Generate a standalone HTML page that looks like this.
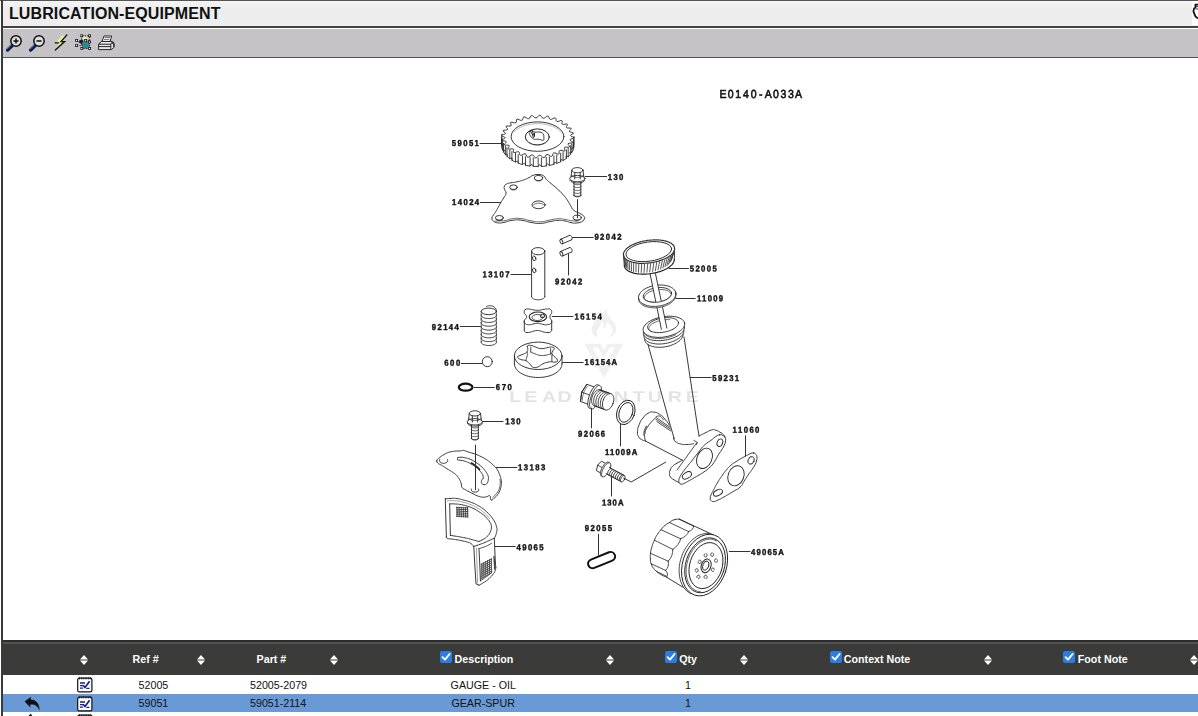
<!DOCTYPE html>
<html>
<head>
<meta charset="utf-8">
<title>LUBRICATION-EQUIPMENT</title>
<style>
html,body{margin:0;padding:0;background:#fff;overflow:hidden;}
body{width:1198px;height:716px;position:relative;font-family:"Liberation Sans",sans-serif;color:#000;}
#lb{position:absolute;left:1px;top:0;width:2px;height:716px;background:#3a3a3a;}
#topline{position:absolute;left:0;top:0;width:1198px;height:1px;background:#555;}
#hdr{position:absolute;left:3px;top:1px;width:1195px;height:25px;background:linear-gradient(#f5f5f5,#ededed 30%,#eeeeee);}
#hdr h1{position:absolute;left:6px;top:4px;margin:0;font-size:16px;line-height:18px;font-weight:bold;color:#111;white-space:nowrap;letter-spacing:0.1px;}
#hl1{position:absolute;left:3px;top:26px;width:1195px;height:2px;background:#444;}
#tb{position:absolute;left:3px;top:29px;width:1195px;height:28px;background:#c5c3c5;}
#hl2{position:absolute;left:3px;top:57px;width:1195px;height:1px;background:#555;}
#diagram{position:absolute;left:0;top:58px;width:1198px;height:582px;display:block;will-change:transform;}
#diagram text{font-family:"Liberation Sans",sans-serif;font-weight:bold;fill:#111;stroke:#111;stroke-width:0.4px;text-rendering:geometricPrecision;}
#thead{position:absolute;left:3px;top:640px;width:1195px;height:35px;background:#3b3b39;color:#fff;font-weight:bold;font-size:10.7px;}
#thead:before{content:"";position:absolute;left:0;top:0;width:100%;height:2px;background:#2c2c2c;}
#thead:after{content:"";position:absolute;left:0;top:2px;width:100%;height:2px;background:#525252;}
.th{position:absolute;top:12px;line-height:14px;white-space:nowrap;}
.cb{position:absolute;top:11px;width:12px;height:12px;background:#2b7de0;border-radius:2px;}
.cb svg{position:absolute;left:0;top:0;}
.so{position:absolute;top:15px;width:8px;height:10px;}
.row{position:absolute;left:3px;width:1195px;height:18px;font-size:10.7px;color:#111;}
.row span{position:absolute;top:2px;line-height:14px;white-space:nowrap;}
#r1 span{top:3px;}
.row svg{position:absolute;}
#r1{top:675px;height:19px;background:#fff;}
#r2{top:694px;background:#6a9ad6;}
#r3{top:712px;background:#fff;height:4px;}
#ui{position:absolute;left:0;top:0;width:1198px;height:58px;}
</style>
</head>
<body>
<div id="topline"></div>
<div id="hdr"><h1>LUBRICATION-EQUIPMENT</h1></div>
<div id="hl1"></div>
<div id="tb"></div>
<div id="hl2"></div>
<svg id="ui" width="1198" height="58" viewBox="0 0 1198 58">
<g fill="none" stroke-linecap="round">
<path d="M12.4 45.2L7.6 50" stroke="#0c1c4a" stroke-width="3.4"/><path d="M11.6 44.6L7.2 49" stroke="#5f8fd0" stroke-width="1"/>
<circle cx="16" cy="41" r="5.2" fill="#dedede" stroke="#111" stroke-width="1.5"/><path d="M13.4 41H18.6M16 38.4V43.6" stroke="#111" stroke-width="1.5" stroke-linecap="butt"/>
<path d="M35.4 45.2L30.6 50" stroke="#0c1c4a" stroke-width="3.4"/><path d="M34.6 44.6L30.2 49" stroke="#5f8fd0" stroke-width="1"/>
<circle cx="39" cy="41" r="5.2" fill="#dedede" stroke="#111" stroke-width="1.5"/><path d="M36.4 41H41.6" stroke="#111" stroke-width="1.5" stroke-linecap="butt"/>
<path d="M61.6 35.8L66 35.4L60.4 41.6L64 41.6L56.4 48.6L59 43L56 43Z" fill="#eaee92" stroke="none"/>
<path d="M66.8 35L61 41.6L64.6 41.6L55.4 50" stroke="#111" stroke-width="1.3" stroke-linejoin="miter"/><path d="M55.2 42.8H58.6" stroke="#111" stroke-width="1.2"/>
</g>
<g>
<path d="M78 42L83 38.6L84 45.6Z" fill="#16164e"/>
<circle cx="85.6" cy="44.6" r="3.8" fill="#2e8a8a"/><circle cx="84.6" cy="38.8" r="2.6" fill="#eef4b0"/>
<path d="M81.8 35.8H89.6V48.4H81.8Z" fill="none" stroke="#111" stroke-width="0.9" stroke-dasharray="1.6 1.2"/>
<path d="M76.6 40.4H89.4M76.6 45.6H82" fill="none" stroke="#111" stroke-width="0.8" stroke-dasharray="1.4 1.4"/>
<g fill="#fff" stroke="#111" stroke-width="0.8"><rect x="80.8" y="34.8" width="2" height="2"/><rect x="88.6" y="34.8" width="2" height="2"/><rect x="75.6" y="39.4" width="2" height="2"/><rect x="75.6" y="44.6" width="2" height="2"/><rect x="80.8" y="47.4" width="2" height="2"/><rect x="88.6" y="47.4" width="2" height="2"/><rect x="88.6" y="41" width="2" height="2"/><rect x="84.6" y="39.4" width="2" height="2"/></g>
</g>
<g stroke="#111" stroke-width="0.9" stroke-linejoin="round">
<path d="M102 41.6L104 36H111.6L110 41.6Z" fill="#fff"/>
<path d="M98.6 44.2L101.6 41.4H111L113.6 43.4V47.6L111.6 49.6H98.6Z" fill="#e8e8e8"/>
<path d="M98.6 44.2H110.6L113.4 42.6M98.8 46.6H110.8M110.8 44.2V49.4" fill="none"/>
<path d="M104.6 37.6H110M104 39.4H109.4" fill="none" stroke-width="0.6"/>
<path d="M111.4 41.6C113.4 42.4 114.4 44 113.8 47" fill="none" stroke="#333" stroke-width="1.6"/>
</g>
<rect x="1192" y="1" width="6" height="24" fill="#fff"/>
<path d="M1198 4.6H1195.4V7.6L1194 8.6L1193.4 11.4L1195.4 16.4L1198 18.6" fill="#fff" stroke="#111" stroke-width="1.8" stroke-linejoin="round"/>
<path d="M1195.6 6.6H1198M1195.6 9H1198" stroke="#1c3c5c" stroke-width="1"/>
</svg>
<svg id="diagram" width="1198" height="582" viewBox="0 58 1198 582">
<g fill="#000" stroke="none">
<text transform="translate(0 402.2) scale(1.25 1)" x="407.4 419.4 433.6 446.1 464.3 477.3 491 506.2 518.2 534.2 548.7" y="0" font-size="15.8" opacity="0.11" style="font-weight:bold;stroke:none;fill:#000">LEADVENTURE</text>
<path opacity="0.06" d="M584.4 343.8H600.4L603.8 350.6L607.4 343.8H623.4L604 378.2Z M592.6 347.6L603.8 368L615 347.6H609.6L603.8 358.4L598 347.6Z" fill-rule="evenodd"/>
<path opacity="0.06" d="M598.6 304.6C601.6 310.6 600.6 314.6 597.4 318.6C594.4 322.6 591 326.4 591.6 331C592.2 334.6 595 336.8 598.6 337.4C596.4 334.6 596.4 331.4 598.4 328.4C600.4 325.6 601.6 323.4 601 320.4C603.6 322.6 604.4 325.8 603.6 328.8C606 327 607 324.2 606.6 321C609.6 324.2 613 327.6 612.4 331.6C612 334.6 610 336.4 607.4 337.4C612.6 336.8 616.4 333.4 616.2 328.6C616 323 611 319.6 608.4 315.6C606.8 313 606.6 310.6 607.4 308.2C604.6 309.8 603.4 312.4 603.8 315.4C601.6 312.2 600.6 308.4 598.6 304.6Z"/>
</g>
<g fill="none" stroke="#222" stroke-width="0.9" stroke-linecap="round" stroke-linejoin="round">
<path d="M573.9 137.8C573.8 138.8 570.5 138.6 570.1 139.7C569.8 140.8 573.1 141.6 572.6 142.5C572.1 143.5 568.8 142.7 568.1 143.7C567.4 144.8 570.3 146.1 569.5 147C568.7 147.8 565.6 146.5 564.6 147.4C563.5 148.3 565.9 150.1 564.8 150.9C563.7 151.6 561.1 149.7 559.7 150.5C558.2 151.2 560.1 153.5 558.7 154.1C557.4 154.6 555.3 152.3 553.7 152.9C552 153.4 553.2 156 551.7 156.4C550.1 156.7 548.7 154.2 546.9 154.5C545.1 154.8 545.6 157.5 543.9 157.7C542.2 157.9 541.5 155.1 539.6 155.2C537.8 155.2 537.5 158 535.8 158C534.1 157.9 534.2 155.1 532.3 154.9C530.4 154.7 529.4 157.4 527.8 157.2C526.1 156.9 527 154.2 525.2 153.8C523.5 153.4 521.8 155.8 520.3 155.3C518.8 154.9 520.4 152.4 518.8 151.8C517.3 151.1 515 153.2 513.7 152.6C512.4 151.9 514.6 149.8 513.3 149C512.1 148.2 509.3 149.8 508.3 149C507.3 148.2 510 146.6 509.1 145.6C508.2 144.6 505 145.7 504.4 144.8C503.7 143.9 506.8 142.8 506.3 141.7C505.8 140.7 502.4 141.1 502.1 140.2C501.8 139.2 505.2 138.8 505.1 137.6C504.9 136.5 501.6 136.4 501.7 135.4C501.8 134.4 505.1 134.6 505.5 133.5C505.8 132.4 502.5 131.6 503 130.7C503.5 129.7 506.8 130.5 507.5 129.5C508.2 128.4 505.3 127.1 506.1 126.2C506.9 125.4 510 126.7 511 125.8C512.1 124.9 509.7 123.1 510.8 122.3C511.9 121.6 514.5 123.5 515.9 122.7C517.4 122 515.5 119.7 516.9 119.1C518.2 118.6 520.3 120.9 521.9 120.3C523.6 119.8 522.4 117.2 523.9 116.8C525.5 116.5 526.9 119 528.7 118.7C530.5 118.4 530 115.7 531.7 115.5C533.4 115.3 534.1 118.1 536 118C537.8 118 538.1 115.2 539.8 115.2C541.5 115.3 541.4 118.1 543.3 118.3C545.2 118.5 546.2 115.8 547.8 116C549.5 116.3 548.6 119 550.4 119.4C552.1 119.8 553.8 117.4 555.3 117.9C556.8 118.3 555.2 120.8 556.8 121.4C558.3 122.1 560.6 120 561.9 120.6C563.2 121.3 561 123.4 562.3 124.2C563.5 125 566.3 123.4 567.3 124.2C568.3 125 565.6 126.6 566.5 127.6C567.4 128.6 570.6 127.5 571.2 128.4C571.9 129.3 568.8 130.4 569.3 131.5C569.8 132.5 573.2 132.1 573.5 133C573.8 134 570.4 134.4 570.5 135.6C570.7 136.7 574 136.8 573.9 137.8Z" fill="#fff"/>
<path d="M574 136.4V145L573.7 147.8V139.2M573.7 147.8Q570.1 147.1 573.2 149.7M573.2 141.1V149.7L571.8 152.5V143.9M571.8 152.5Q568.1 151.1 570.6 154.3M570.6 145.7V154.3L568.2 156.8V148.2M568.2 156.8Q564.6 154.8 566.4 158.4M566.4 149.8V158.4L563.1 160.5V151.9M563.1 160.5Q559.7 157.9 560.7 161.8M560.7 153.2V161.8L556.7 163.4V154.8M556.7 163.4Q553.7 160.3 553.9 164.4M553.9 155.8V164.4L549.4 165.5V156.9M549.4 165.5Q546.9 161.9 546.3 166M546.3 157.4V166L541.4 166.5V157.9M541.4 166.5Q539.6 162.6 538.2 166.6M538.2 158V166.6L533.3 166.4V157.8M533.3 166.4Q532.3 162.3 530.1 166.1M530.1 157.5V166.1L525.5 165.3V156.7M525.5 165.3Q525.2 161.2 522.5 164.6M522.5 156V164.6L518.2 163.2V154.6M518.2 163.2Q518.8 159.2 515.5 162.1M515.5 153.5V162.1L511.9 160.2V151.6M511.9 160.2Q513.3 156.4 509.8 158.7M509.8 150.1V158.7L506.9 156.4V147.8M506.9 156.4Q509.1 153 505.4 154.7M505.4 146.1V154.7L503.5 152V143.4M503.5 152Q506.3 149.1 502.6 150.2M502.6 141.6V150.2L501.8 147.4V138.8M501.8 147.4Q505.1 145 501.6 145.4M501.6 136.8V145.4L501.9 142.6V134" stroke-width="0.85"/>
<ellipse cx="537.5" cy="136.6" rx="26.4" ry="14.7"/>
<path d="M514.5 131.7L515.8 130.4L517.3 129.1L519.1 128L521.1 127L523.3 126.1L525.6 125.3L528.1 124.7L530.7 124.2L533.4 123.9L536.1 123.7L538.9 123.7L541.6 123.9L544.3 124.2L546.9 124.7L549.4 125.3L551.7 126.1L553.9 127L555.9 128L557.7 129.1L559.2 130.4L560.5 131.7" stroke-width="0.5" stroke="#777"/>
<ellipse cx="537.3" cy="136.9" rx="12" ry="8" stroke-width="1"/>
<path d="M547.9 140L547.6 140.7L547.1 141.4L546.5 142L545.8 142.6L545.1 143.1L544.2 143.6L543.3 144.1L542.3 144.4L541.2 144.7L540.1 145L539 145.1L537.9 145.2L536.7 145.2L535.6 145.1L534.5 145L533.4 144.7L532.3 144.4L531.3 144.1L530.4 143.6L529.5 143.1L528.8 142.6L528.1 142L527.5 141.4L527 140.7L526.7 140" stroke-width="0.6" stroke="#666"/>
<path d="M531.7 130.6C532.5 130.7 532.5 130.8 533.4 131.2C534.3 131.6 533.9 131.9 535 132.1C536.1 132.3 536.2 132 537.5 132C538.8 132 538.9 131.9 540 132.1C541.1 132.3 541 132.3 541.8 132.7C542.6 133.1 542.5 133.1 543 133.7C543.5 134.3 543.5 134.3 543.7 135C543.9 135.7 543.7 135.5 543.8 136.4C543.9 137.3 543.9 137.3 543.9 138.2C543.9 139.1 544 139 543.8 139.6C543.6 140.2 543.5 140.3 543 140.5C542.5 140.7 542.5 140.4 541.8 140.2C541.1 140 541.3 139.8 540.5 139.6C539.7 139.4 539.7 139.4 538.8 139.3C537.9 139.2 538 139.2 537.1 139.2C536.2 139.2 536.4 139.3 535.6 139.3C534.8 139.3 534.9 139.4 534.2 139.2C533.5 139 533.5 139 532.8 138.5C532.1 138 532.3 138.2 531.7 137.5C531.1 136.8 531 136.7 530.4 135.8C529.8 134.9 529.9 134.9 529.6 134.1C529.3 133.3 529.3 133.5 529.2 132.8C529.1 132.1 529.1 132.2 529.4 131.6C529.7 131 529.8 131 530.4 130.7C531 130.4 530.9 130.5 531.7 130.6Z" stroke-width="0.9"/>
<path d="M530.4 131.2L532.4 134.4M532.2 131L534.4 136.2M532.4 134.4L533.4 137.6M534.6 133L534.4 136.2" stroke-width="0.9" stroke="#111"/>
<path d="M538.5 174.6C541.8 174.8 540.8 174.2 543.5 175.8C546.2 177.4 544 176.9 546.5 179.5C549 182.1 547.5 180.5 551 183.5C554.5 186.5 553.2 185.1 557 188.6C560.8 192.1 559.2 190.3 562.5 194C565.8 197.7 564.3 195.8 567 199.6C569.7 203.4 568.2 201.9 570.5 205.5C572.8 209.1 571 207.8 574 210.4C577 213 576.2 211.3 579.5 213.2C582.8 215.1 582.2 214.3 583.8 216.2C585.4 218.1 585 217.1 584.2 219C583.4 220.9 584.2 220.5 581.5 221.8C578.8 223.1 579.5 222.7 576 223C572.5 223.3 574.7 223.3 571 222.6C567.3 221.9 569.3 221.7 565 221C560.7 220.3 563 220.2 558 220.4C553 220.6 555.8 220.6 550 221.6C544.2 222.6 546.8 223.1 540.5 223.4C534.2 223.7 537.5 223.5 531 222.4C524.5 221.3 527.3 220.9 521 220.2C514.7 219.5 517.7 219.7 512 220.4C506.3 221.1 508.8 221.6 504 222.4C499.2 223.2 501.1 223.3 497.5 222.8C493.9 222.3 495 222.4 493.2 220.8C491.4 219.2 491.9 219.9 492 218C492.1 216.1 491.9 217.5 493.4 215C494.9 212.5 494.2 214.2 496.4 210.5C498.6 206.8 497.6 208.2 500 204C502.4 199.8 501.6 201.5 503.6 198C505.6 194.5 505.7 196.3 506 193.5C506.3 190.7 505.1 191.9 504.6 189.5C504.1 187.1 503.7 188.2 504.4 186.4C505.1 184.6 504.4 185.2 506.6 184C508.8 182.8 507.5 183.5 511 182.8C514.5 182.1 512.8 182.7 517 181.8C521.2 180.9 519.5 181.4 523.5 180C527.5 178.6 525.7 179.2 529 177.6C532.3 176 530.3 176.2 533.5 175.2C536.7 174.2 535.2 174.4 538.5 174.6Z" fill="#fff"/>
<path d="M495 221.2C496.3 221.1 495.7 221 499 220.8C502.3 220.6 500.7 221.3 505 220.6C509.3 219.9 506.7 219.5 512 218.8C517.3 218.1 514.7 217.9 521 218.6C527.3 219.3 524.5 219.7 531 220.8C537.5 221.9 534.2 222.1 540.5 221.8C546.8 221.5 544.2 221 550 220C555.8 219 553 219 558 218.8C563 218.6 560.3 218.7 565 219.4C569.7 220.1 567.7 220.3 572 220.8C576.3 221.3 576 220.9 578 221" stroke-width="0.7"/>
<ellipse cx="538.5" cy="178" rx="4.1" ry="2.5"/>
<path d="M541.9 179.4L541.8 179.7L541.7 179.9L541.6 180.1L541.4 180.2L541.1 180.4L540.9 180.6L540.6 180.7L540.3 180.8L540 180.9L539.6 181L539.2 181.1L538.9 181.1L538.5 181.1L538.1 181.1L537.8 181.1L537.4 181L537 180.9L536.7 180.8L536.4 180.7L536.1 180.6L535.9 180.4L535.6 180.2L535.4 180.1L535.3 179.9L535.2 179.7L535.1 179.4" stroke-width="0.6"/>
<ellipse cx="513.5" cy="187.2" rx="3.8" ry="2.3"/>
<path d="M516.7 188.6L516.6 188.8L516.5 189L516.3 189.2L516.2 189.3L515.9 189.5L515.7 189.6L515.4 189.8L515.2 189.9L514.8 190L514.5 190L514.2 190.1L513.8 190.1L513.5 190.1L513.2 190.1L512.8 190.1L512.5 190L512.2 190L511.8 189.9L511.6 189.8L511.3 189.6L511.1 189.5L510.8 189.3L510.7 189.2L510.5 189L510.4 188.8L510.3 188.6" stroke-width="0.6"/>
<ellipse cx="499.4" cy="217.8" rx="4" ry="2.3"/>
<path d="M502.7 219.2L502.7 219.4L502.5 219.6L502.4 219.8L502.2 219.9L502 220.1L501.7 220.2L501.4 220.4L501.1 220.5L500.8 220.6L500.5 220.6L500.1 220.7L499.8 220.7L499.4 220.7L499 220.7L498.7 220.7L498.3 220.6L498 220.6L497.7 220.5L497.4 220.4L497.1 220.2L496.8 220.1L496.6 219.9L496.4 219.8L496.3 219.6L496.1 219.4L496.1 219.2" stroke-width="0.6"/>
<ellipse cx="577.2" cy="217.6" rx="4.1" ry="2.4"/>
<path d="M580.6 219L580.5 219.2L580.4 219.4L580.3 219.6L580.1 219.8L579.8 220L579.6 220.1L579.3 220.2L579 220.3L578.7 220.4L578.3 220.5L577.9 220.6L577.6 220.6L577.2 220.6L576.8 220.6L576.5 220.6L576.1 220.5L575.7 220.4L575.4 220.3L575.1 220.2L574.8 220.1L574.6 220L574.3 219.8L574.1 219.6L574 219.4L573.9 219.2L573.8 219" stroke-width="0.6"/>
<ellipse cx="538.6" cy="204.8" rx="6.6" ry="3.9"/>
<path d="M533.1 205.3L533.4 205L533.7 204.7L534 204.4L534.5 204.2L534.9 203.9L535.4 203.7L535.9 203.6L536.5 203.4L537.1 203.3L537.7 203.2L538.3 203.2L538.9 203.2L539.5 203.2L540.1 203.3L540.7 203.4L541.3 203.6L541.8 203.7L542.3 203.9L542.7 204.2L543.2 204.4L543.5 204.7L543.8 205L544.1 205.3" stroke-width="0.7"/>
<ellipse cx="577.4" cy="170.2" rx="5.6" ry="2.6" fill="#fff"/>
<path d="M571.8 170.2L571 176.9M583 170.2L583.8 176.9"/>
<path d="M574.8 172.7V178.9M580.2 172.6V178.8"/>
<path d="M583.4 175.3L583.2 175.6L582.9 175.9L582.6 176.1L582.2 176.4L581.8 176.6L581.3 176.8L580.8 176.9L580.2 177.1L579.6 177.2L579 177.3L578.4 177.4L577.7 177.4L577.1 177.4L576.4 177.4L575.8 177.3L575.2 177.2L574.6 177.1L574 176.9L573.5 176.8L573 176.6L572.6 176.4L572.2 176.1L571.9 175.9L571.6 175.6L571.4 175.3" stroke-width="0.7"/>
<ellipse cx="577.4" cy="178.6" rx="7.7" ry="3.2"/>
<path d="M584.7 180.3L584.6 180.6L584.4 180.9L584.1 181.2L583.8 181.5L583.4 181.7L582.9 182L582.3 182.2L581.7 182.4L581.1 182.6L580.4 182.7L579.7 182.8L578.9 182.9L578.2 183L577.4 183L576.6 183L575.9 182.9L575.1 182.8L574.4 182.7L573.7 182.6L573.1 182.4L572.5 182.2L571.9 182L571.4 181.7L571 181.5L570.7 181.2L570.4 180.9L570.2 180.6L570.1 180.3"/>
<path d="M574 182.2V195.4M580.8 182.2V195.4"/>
<path d="M581 183.4L581 183.5L580.9 183.7L580.8 183.8L580.7 183.9L580.5 184.1L580.3 184.2L580.1 184.3L579.8 184.4L579.5 184.5L579.2 184.5L578.9 184.6L578.5 184.6L578.1 184.7L577.8 184.7L577.4 184.7L577 184.7L576.7 184.7L576.3 184.6L575.9 184.6L575.6 184.5L575.3 184.5L575 184.4L574.7 184.3L574.5 184.2L574.3 184.1L574.1 183.9L574 183.8L573.9 183.7L573.8 183.5L573.8 183.4" stroke-width="0.8"/>
<path d="M581 186.3L581 186.4L580.9 186.6L580.8 186.7L580.7 186.8L580.5 187L580.3 187.1L580.1 187.2L579.8 187.3L579.5 187.4L579.2 187.4L578.9 187.5L578.5 187.5L578.1 187.6L577.8 187.6L577.4 187.6L577 187.6L576.7 187.6L576.3 187.5L575.9 187.5L575.6 187.4L575.3 187.4L575 187.3L574.7 187.2L574.5 187.1L574.3 187L574.1 186.8L574 186.7L573.9 186.6L573.8 186.4L573.8 186.3" stroke-width="0.8"/>
<path d="M581 189.2L581 189.3L580.9 189.5L580.8 189.6L580.7 189.7L580.5 189.8L580.3 190L580.1 190.1L579.8 190.2L579.5 190.3L579.2 190.3L578.9 190.4L578.5 190.4L578.1 190.5L577.8 190.5L577.4 190.5L577 190.5L576.7 190.5L576.3 190.4L575.9 190.4L575.6 190.3L575.3 190.3L575 190.2L574.7 190.1L574.5 190L574.3 189.8L574.1 189.7L574 189.6L573.9 189.5L573.8 189.3L573.8 189.2" stroke-width="0.8"/>
<path d="M581 192.1L581 192.2L580.9 192.4L580.8 192.5L580.7 192.6L580.5 192.8L580.3 192.9L580.1 193L579.8 193.1L579.5 193.2L579.2 193.2L578.9 193.3L578.5 193.3L578.1 193.4L577.8 193.4L577.4 193.4L577 193.4L576.7 193.4L576.3 193.3L575.9 193.3L575.6 193.2L575.3 193.2L575 193.1L574.7 193L574.5 192.9L574.3 192.8L574.1 192.6L574 192.5L573.9 192.4L573.8 192.2L573.8 192.1" stroke-width="0.8"/>
<path d="M581 195L581 195.1L580.9 195.3L580.8 195.4L580.7 195.5L580.5 195.7L580.3 195.8L580.1 195.9L579.8 196L579.5 196.1L579.2 196.1L578.9 196.2L578.5 196.2L578.1 196.3L577.8 196.3L577.4 196.3L577 196.3L576.7 196.3L576.3 196.2L575.9 196.2L575.6 196.1L575.3 196.1L575 196L574.7 195.9L574.5 195.8L574.3 195.7L574.1 195.5L574 195.4L573.9 195.3L573.8 195.1L573.8 195" stroke-width="0.8"/>
<path d="M580.8 195.4L580.8 195.5L580.7 195.7L580.6 195.8L580.5 196L580.3 196.1L580.2 196.2L579.9 196.3L579.7 196.4L579.4 196.5L579.1 196.6L578.8 196.7L578.5 196.7L578.1 196.8L577.8 196.8L577.4 196.8L577 196.8L576.7 196.8L576.3 196.7L576 196.7L575.7 196.6L575.4 196.5L575.1 196.4L574.9 196.3L574.6 196.2L574.5 196.1L574.3 196L574.2 195.8L574.1 195.7L574 195.5L574 195.4"/>
<path d="M577.5 199.6L577.5 217.8" stroke-width="1" stroke="#333"/>
<ellipse cx="538.2" cy="251.2" rx="6.6" ry="3.6"/>
<path d="M531.6 251.2V296.4M544.8 251.2V296.4"/>
<path d="M544.8 296.4L544.8 296.8L544.7 297.1L544.5 297.5L544.2 297.8L543.9 298.1L543.5 298.4L543.1 298.7L542.6 298.9L542.1 299.2L541.5 299.3L540.9 299.5L540.2 299.6L539.6 299.7L538.9 299.8L538.2 299.8L537.5 299.8L536.8 299.7L536.2 299.6L535.5 299.5L534.9 299.3L534.3 299.2L533.8 298.9L533.3 298.7L532.9 298.4L532.5 298.1L532.2 297.8L531.9 297.5L531.7 297.1L531.6 296.8L531.6 296.4"/>
<ellipse cx="534.2" cy="258.4" rx="1.6" ry="2.4" transform="rotate(-15 534.2 258.4)"/>
<ellipse cx="534.2" cy="270.4" rx="1.6" ry="2.4" transform="rotate(-15 534.2 270.4)"/>
<ellipse cx="561.4" cy="241.6" rx="1.3" ry="2.4" transform="rotate(-23.5 561.4 241.6)"/>
<path d="M562.4 243.8L571.6 239.8M560.4 239.4L569.6 235.4"/>
<path d="M569.6 235.4L569.8 235.4L569.9 235.3L570.1 235.3L570.2 235.4L570.4 235.4L570.5 235.5L570.7 235.6L570.8 235.7L571 235.9L571.2 236.1L571.3 236.2L571.4 236.4L571.6 236.6L571.7 236.9L571.8 237.1L571.9 237.3L572 237.6L572 237.8L572.1 238L572.1 238.3L572.1 238.5L572.1 238.7L572.1 238.9L572.1 239.1L572 239.2L572 239.4L571.9 239.5L571.8 239.6L571.7 239.7L571.6 239.8"/>
<ellipse cx="561.4" cy="253.8" rx="1.3" ry="2.4" transform="rotate(-23.5 561.4 253.8)"/>
<path d="M562.4 256L571.6 252M560.4 251.6L569.6 247.6"/>
<path d="M569.6 247.6L569.8 247.6L569.9 247.5L570.1 247.5L570.2 247.6L570.4 247.6L570.5 247.7L570.7 247.8L570.8 247.9L571 248.1L571.2 248.3L571.3 248.4L571.4 248.6L571.6 248.8L571.7 249.1L571.8 249.3L571.9 249.5L572 249.8L572 250L572.1 250.2L572.1 250.5L572.1 250.7L572.1 250.9L572.1 251.1L572.1 251.3L572 251.4L572 251.6L571.9 251.7L571.8 251.8L571.7 251.9L571.6 252"/>
<ellipse cx="488.8" cy="311.4" rx="7.6" ry="3.3"/>
<path d="M496.1 314.4L496.3 314.7L496.4 315.1L496.4 315.4L496.3 315.8L496.1 316.1L495.9 316.4L495.6 316.7L495.2 317L494.7 317.3L494.2 317.6L493.6 317.8L492.9 318L492.3 318.2L491.5 318.3L490.8 318.4L490 318.5L489.2 318.5L488.4 318.5L487.6 318.5L486.8 318.4L486.1 318.3L485.3 318.2L484.7 318L484 317.8L483.4 317.6L482.9 317.3L482.4 317L482 316.7L481.7 316.4L481.5 316.1L481.3 315.8L481.2 315.4L481.2 315.1L481.3 314.7L481.5 314.4"/>
<path d="M496.1 318.2L496.3 318.6L496.4 318.9L496.4 319.3L496.3 319.6L496.1 320L495.9 320.3L495.6 320.6L495.2 320.9L494.7 321.2L494.2 321.4L493.6 321.7L492.9 321.9L492.3 322L491.5 322.2L490.8 322.3L490 322.4L489.2 322.4L488.4 322.4L487.6 322.4L486.8 322.3L486.1 322.2L485.3 322L484.7 321.9L484 321.7L483.4 321.4L482.9 321.2L482.4 320.9L482 320.6L481.7 320.3L481.5 320L481.3 319.6L481.2 319.3L481.2 318.9L481.3 318.6L481.5 318.2"/>
<path d="M496.1 322.1L496.3 322.4L496.4 322.8L496.4 323.1L496.3 323.5L496.1 323.8L495.9 324.1L495.6 324.4L495.2 324.7L494.7 325L494.2 325.3L493.6 325.5L492.9 325.7L492.3 325.9L491.5 326L490.8 326.1L490 326.2L489.2 326.2L488.4 326.2L487.6 326.2L486.8 326.1L486.1 326L485.3 325.9L484.7 325.7L484 325.5L483.4 325.3L482.9 325L482.4 324.7L482 324.4L481.7 324.1L481.5 323.8L481.3 323.5L481.2 323.1L481.2 322.8L481.3 322.4L481.5 322.1"/>
<path d="M496.1 325.9L496.3 326.3L496.4 326.6L496.4 327L496.3 327.3L496.1 327.7L495.9 328L495.6 328.3L495.2 328.6L494.7 328.9L494.2 329.1L493.6 329.4L492.9 329.6L492.3 329.7L491.5 329.9L490.8 330L490 330.1L489.2 330.1L488.4 330.1L487.6 330.1L486.8 330L486.1 329.9L485.3 329.7L484.7 329.6L484 329.4L483.4 329.1L482.9 328.9L482.4 328.6L482 328.3L481.7 328L481.5 327.7L481.3 327.3L481.2 327L481.2 326.6L481.3 326.3L481.5 325.9"/>
<path d="M496.1 329.8L496.3 330.1L496.4 330.5L496.4 330.8L496.3 331.2L496.1 331.5L495.9 331.8L495.6 332.1L495.2 332.4L494.7 332.7L494.2 333L493.6 333.2L492.9 333.4L492.3 333.6L491.5 333.7L490.8 333.8L490 333.9L489.2 333.9L488.4 333.9L487.6 333.9L486.8 333.8L486.1 333.7L485.3 333.6L484.7 333.4L484 333.2L483.4 333L482.9 332.7L482.4 332.4L482 332.1L481.7 331.8L481.5 331.5L481.3 331.2L481.2 330.8L481.2 330.5L481.3 330.1L481.5 329.8"/>
<path d="M496.1 333.6L496.3 334L496.4 334.3L496.4 334.7L496.3 335L496.1 335.4L495.9 335.7L495.6 336L495.2 336.3L494.7 336.6L494.2 336.8L493.6 337.1L492.9 337.3L492.3 337.4L491.5 337.6L490.8 337.7L490 337.8L489.2 337.8L488.4 337.8L487.6 337.8L486.8 337.7L486.1 337.6L485.3 337.4L484.7 337.3L484 337.1L483.4 336.8L482.9 336.6L482.4 336.3L482 336L481.7 335.7L481.5 335.4L481.3 335L481.2 334.7L481.2 334.3L481.3 334L481.5 333.6"/>
<path d="M496.1 337.5L496.3 337.8L496.4 338.2L496.4 338.5L496.3 338.9L496.1 339.2L495.9 339.5L495.6 339.8L495.2 340.1L494.7 340.4L494.2 340.7L493.6 340.9L492.9 341.1L492.3 341.3L491.5 341.4L490.8 341.5L490 341.6L489.2 341.6L488.4 341.6L487.6 341.6L486.8 341.5L486.1 341.4L485.3 341.3L484.7 341.1L484 340.9L483.4 340.7L482.9 340.4L482.4 340.1L482 339.8L481.7 339.5L481.5 339.2L481.3 338.9L481.2 338.5L481.2 338.2L481.3 337.8L481.5 337.5"/>
<path d="M496.1 341.3L496.3 341.7L496.4 342L496.4 342.4L496.3 342.7L496.1 343.1L495.9 343.4L495.6 343.7L495.2 344L494.7 344.3L494.2 344.5L493.6 344.8L492.9 345L492.3 345.1L491.5 345.3L490.8 345.4L490 345.5L489.2 345.5L488.4 345.5L487.6 345.5L486.8 345.4L486.1 345.3L485.3 345.1L484.7 345L484 344.8L483.4 344.5L482.9 344.3L482.4 344L482 343.7L481.7 343.4L481.5 343.1L481.3 342.7L481.2 342.4L481.2 342L481.3 341.7L481.5 341.3"/>
<path d="M481.2 311.4V342.2M496.4 311.4V342.2" stroke-width="0.6"/>
<path d="M486.5 306.4C490.5 304.6 495.5 306 496.6 310.4" stroke-width="0.8"/>
<circle cx="487.3" cy="361.7" r="5"/>
<ellipse cx="465.6" cy="387.2" rx="6.8" ry="3.5" stroke-width="2.2" stroke="#111"/>
<path d="M525.3 309.6C526.4 308.4 525.8 309.1 527.6 309C529.4 308.9 528.5 309 530.6 309.3C532.7 309.6 531.8 309.7 534 310C536.2 310.3 535.1 310.3 537.3 310.3C539.5 310.3 538.3 310.3 540.6 310C542.9 309.7 541.8 309.6 544.1 309.3C546.4 309 545.4 308.9 547.6 309C549.8 309.1 549.2 308.4 550.6 309.6C552 310.8 551.7 310.9 551.7 312.6C551.7 314.3 551.2 313.2 550.6 314.6C550 316 550 315.3 550 316.8C550 318.3 550 317.7 550.6 319C551.2 320.3 551.6 319.3 551.7 320.8C551.8 322.3 552.2 322.1 550.8 323.4C549.4 324.7 549.8 324.2 547.6 324.6C545.4 325 546.4 324.9 544.1 324.6C541.8 324.3 542.9 324.2 540.6 323.8C538.3 323.4 539.5 323.3 537.3 323.3C535.1 323.3 536.2 323.4 534 323.8C531.8 324.2 532.7 324.3 530.6 324.6C528.5 324.9 529.4 325 527.6 324.6C525.8 324.2 526.2 324.7 525.1 323.4C524 322.1 524 322.3 524.2 320.8C524.4 319.3 524.8 320.3 525.6 319C526.4 317.7 526.6 318.3 526.6 316.8C526.6 315.3 526.4 316 525.6 314.6C524.8 313.2 524.3 314.3 524.2 312.6C524.1 310.9 524.2 310.8 525.3 309.6Z" fill="#fff"/>
<path d="M524.3 321V330M551.7 321V330"/>
<path d="M524.3 330C524.5 330.6 524.1 331 525 331.8C525.9 332.6 525.1 332.4 527 332.5C528.9 332.6 528.3 332.6 530.6 332.1C532.9 331.6 531.8 331.5 534 331C536.2 330.5 535.1 330.5 537.3 330.5C539.5 330.5 538.3 330.5 540.6 331C542.9 331.5 541.6 331.6 544.1 332.1C546.6 332.6 545.8 332.6 548 332.5C550.2 332.4 549.4 332.6 550.6 331.8C551.8 331 551.3 330.6 551.7 330"/>
<ellipse cx="537.9" cy="316.8" rx="8.7" ry="4.8" stroke-width="1.1"/>
<ellipse cx="537.4" cy="317.5" rx="5.4" ry="3" stroke-width="0.8"/>
<ellipse cx="542.4" cy="316" rx="2.2" ry="1.8" stroke-width="0.9"/>
<ellipse cx="538.2" cy="355.8" rx="23.8" ry="13.7" fill="#fff"/>
<path d="M514.4 355.8V363.8M562 355.8V363.8"/>
<path d="M562 363.8L561.9 365.2L561.5 366.6L560.8 368L559.9 369.4L558.8 370.7L557.5 371.9L555.9 373L554.1 374L552.2 374.9L550.1 375.7L547.9 376.3L545.6 376.8L543.1 377.2L540.7 377.4L538.2 377.5L535.7 377.4L533.3 377.2L530.8 376.8L528.5 376.3L526.3 375.7L524.2 374.9L522.3 374L520.5 373L518.9 371.9L517.6 370.7L516.5 369.4L515.6 368L514.9 366.6L514.5 365.2L514.4 363.8"/>
<path d="M527.4 346.1C528.2 345 528.8 345.2 530.8 345.4C532.8 345.6 532.5 345.9 534.8 346.7C537.1 347.5 537 347.9 539.5 348.4C542 348.9 541.9 348.7 544.2 348.4C546.5 348.1 546.2 347.7 548.2 347.4C550.2 347.1 550 346.8 551.6 347.1C553.2 347.4 554 347.1 554.2 348.4C554.4 349.7 552.6 350.3 552.2 352.1C551.8 353.9 551.4 352.9 552.8 355C554.2 357.1 557 358.2 557.6 360.1C558.2 362 556.5 361.6 554.9 362.1C553.3 362.6 553.4 361.8 551.6 361.8C549.8 361.8 550.5 361.6 548.2 362.1C545.9 362.6 545.6 362.5 542.9 363.8C540.2 365.1 540.4 365.8 538.2 366.8C536 367.8 536.4 367.5 534.8 367.5C533.2 367.5 533.4 367.7 532.1 366.8C530.8 365.9 531.4 365.5 530.1 364.2C528.8 362.9 528.5 362.8 527.4 361.8C526.3 360.8 527.6 361.1 525.8 360.5C524 359.9 522.9 360.3 520.7 359.5C518.5 358.7 518.1 358.4 517.7 357.4C517.3 356.4 517.6 356.7 519.1 355.8C520.6 354.9 521.3 355.1 523.4 354.1C525.5 353.1 525.6 353.4 526.8 352.1C528 350.8 527.6 351 527.8 349.4C528 347.8 526.6 347.2 527.4 346.1Z"/>
<path d="M530.8 347.1V352.1M550.6 348.7V353.8M551.9 355V361.6" stroke-width="1" stroke="#444"/>
<path d="M530.8 352.1C532.2 352.7 531.9 352.7 535 353.8C538.1 354.9 536.9 354.9 540.2 355.4C543.5 355.9 542.2 355.6 545 355.3C547.8 355 546.5 355.1 548.6 354.6C550.7 354.1 550.5 354.1 551.4 353.8" stroke-width="0.8"/>
<path d="M526.8 352.1C527.1 352.6 527.6 352 527.6 353.6C527.6 355.2 527.4 354.7 526.8 357C526.2 359.3 526.1 359.3 525.8 360.5" stroke-width="0.8"/>
<path d="M436.8 461C436.8 459.5 437 459.9 438.2 458.6C439.4 457.3 439.1 457.8 440.8 456.6C442.5 455.4 442 455.8 444 454.6C446 453.4 445.5 453.5 447.6 452.7C449.7 451.9 449 452.2 451 451.8C453 451.4 452.3 451.4 454.4 451.2C456.5 451 455.9 451.1 458 451C460.1 450.9 459.7 451 461.3 450.8C462.9 450.6 461.9 450.2 463.3 450.3C464.7 450.4 464.3 450.6 466 451.2C467.7 451.8 467 451.5 469.1 452.2C471.2 452.9 470.7 452.6 473 453.4C475.3 454.1 474.5 453.7 476.9 454.7C479.3 455.7 478.6 455.4 481 456.6C483.4 457.8 482.6 457.3 484.8 458.6C487 459.9 486.4 459.5 488.4 461C490.4 462.5 489.9 462 491.6 463.5C493.3 465 492.7 464.5 494.2 466C495.7 467.5 495.2 466.7 496.5 468.4C497.8 470.1 497.4 469.8 498.4 471.8C499.4 473.8 499.1 473.2 499.9 475.2C500.6 477.2 500.4 476.5 500.9 478.6C501.3 480.7 501.3 480 501.4 482.1C501.5 484.2 501.5 483.6 501.2 485.6C500.9 487.6 501 487 500.4 488.9C499.8 490.8 500.1 490.2 499.2 492C498.3 493.8 498.8 493.1 497.5 494.8C496.2 496.5 496.6 496 494.8 497.6C493 499.2 492.9 499.8 491.6 500.1C490.3 500.4 491.2 500 490.6 498.7C490 497.4 490.9 496.3 489.7 495.7C488.5 495.1 488.8 496.2 486.7 496.7C484.6 497.1 484.9 497.2 482.8 497.2C480.7 497.2 481.6 497.1 479.8 496.6C478 496.2 478.9 496.5 476.9 495.7C474.9 494.9 475.3 495 473 493.8C470.7 492.6 471.3 493 469.1 491.8C466.9 490.6 467.6 491 465.6 489.8C463.6 488.6 463.6 489.6 462.3 487.9C461 486.2 461.9 485.9 461.3 484C460.7 482.1 461 482.9 460.4 481.4C459.8 479.9 460.1 480.5 459.3 479.1C458.5 477.7 458.8 478.1 457.6 476.6C456.4 475.1 456.9 475.5 455.4 474.2C453.9 472.9 454.3 473.4 452.6 472.2C450.9 471 451.6 471.5 449.6 470.3C447.6 469.1 448.1 469.4 446 468.1C443.9 466.8 444.4 466.9 442.7 465.9C441 464.8 441.7 465.3 440.4 464.6C439.1 463.9 439.4 464.6 438.3 463.5C437.2 462.4 436.8 462.5 436.8 461Z" fill="#fff"/>
<path d="M500 479.4C500.1 480.8 500.4 480.7 500.2 483.6C500 486.5 500.3 485.2 499.4 488C498.5 490.8 499.1 489.6 497.6 492C496.1 494.4 496.7 493.3 495 495.2C493.3 497.1 493.4 496.8 492.6 497.6" stroke-width="0.7"/>
<path d="M439.8 459.2C439.9 460.1 439.1 460.5 440 461.8C440.9 463.1 440.7 462.9 442.6 463.2C444.5 463.5 444.1 463.5 445.8 462.8C447.5 462.1 447.1 462.1 447.6 461C448.1 459.9 447.5 459.9 447.4 459.4" stroke-width="0.9"/>
<path d="M457.9 457.6C458.8 457.5 459.1 457.2 461 457.2C462.9 457.2 462.2 457.2 464.2 457.6C466.2 458 465.5 457.8 467.6 458.4C469.7 459 468.9 458.6 471.1 459.6C473.3 460.6 472.7 460.4 475 461.8C477.3 463.2 476.8 462.8 478.9 464.4C481 466 480.2 465.4 482 467.2C483.8 469 483.4 468.5 484.8 470.3C486.2 472.1 485.8 471.4 486.8 473.2C487.8 475 487.7 474.4 488.2 476.2C488.7 478 488.5 477.4 488.4 479.2C488.2 481 488.2 480.8 487.7 482.1C487.2 483.4 487.4 482.9 486.8 483.6C486.2 484.3 486.5 484.2 485.7 484.5C484.9 484.8 485 484.8 484 484.6C483 484.5 483.1 484.6 482.3 484C481.5 483.4 481.6 483.6 481.4 482.6C481.2 481.6 481.2 481.8 481.6 480.6C482 479.4 482.4 479.2 482.8 478.6"/>
<path d="M457.9 457.6C457.8 458 457.5 458.1 457.5 458.8C457.5 459.5 456.8 459.6 457.9 460C458.9 460.4 459.1 460 461 460.3C462.9 460.6 462.2 460.4 464.2 461C466.2 461.6 465.5 461.3 467.6 462.2C469.7 463.1 469.2 462.9 471.1 464C473 465.1 472.3 464.6 474 465.8C475.7 467 475.3 466.5 476.9 467.9C478.5 469.3 477.9 468.8 479.4 470.4C480.9 472 480.7 471.7 481.8 473.3C482.9 474.9 482.6 474.3 483 475.8C483.4 477.3 483.2 477.6 483.3 478.4"/>
<path d="M471.4 463C472.5 463.7 472.5 463.5 474.6 465C476.7 466.5 475.9 465.9 477.6 467.4C479.3 468.9 478.9 468.9 479.6 469.6" stroke-width="1.5" stroke="#222"/>
<path d="M471.4 489C471.5 489.7 470.9 490 471.8 491C472.7 492 472.3 491.7 474 492C475.7 492.3 475.5 492.3 477 491.8C478.5 491.3 478.1 491.5 478.6 490.6C479.1 489.7 478.5 489.5 478.4 489" stroke-width="0.9"/>
<ellipse cx="474.9" cy="413.4" rx="5.6" ry="2.6" fill="#fff"/>
<path d="M469.3 413.4L468.5 420.1M480.5 413.4L481.3 420.1"/>
<path d="M472.3 415.9V422.1M477.7 415.8V422"/>
<path d="M480.9 418.5L480.7 418.8L480.4 419.1L480.1 419.3L479.7 419.6L479.3 419.8L478.8 420L478.3 420.1L477.7 420.3L477.1 420.4L476.5 420.5L475.9 420.6L475.2 420.6L474.6 420.6L473.9 420.6L473.3 420.5L472.7 420.4L472.1 420.3L471.5 420.1L471 420L470.5 419.8L470.1 419.6L469.7 419.3L469.4 419.1L469.1 418.8L468.9 418.5" stroke-width="0.7"/>
<ellipse cx="474.9" cy="421.8" rx="7.7" ry="3.2"/>
<path d="M482.2 423.5L482.1 423.8L481.9 424.1L481.6 424.4L481.3 424.7L480.9 424.9L480.4 425.2L479.8 425.4L479.2 425.6L478.6 425.8L477.9 425.9L477.2 426L476.4 426.1L475.7 426.2L474.9 426.2L474.1 426.2L473.4 426.1L472.6 426L471.9 425.9L471.2 425.8L470.6 425.6L470 425.4L469.4 425.2L468.9 424.9L468.5 424.7L468.2 424.4L467.9 424.1L467.7 423.8L467.6 423.5"/>
<path d="M471.5 425.4V438.6M478.3 425.4V438.6"/>
<path d="M478.5 426.6L478.5 426.7L478.4 426.9L478.3 427L478.2 427.1L478 427.2L477.8 427.4L477.6 427.5L477.3 427.6L477 427.7L476.7 427.7L476.4 427.8L476 427.8L475.6 427.9L475.3 427.9L474.9 427.9L474.5 427.9L474.2 427.9L473.8 427.8L473.4 427.8L473.1 427.7L472.8 427.7L472.5 427.6L472.2 427.5L472 427.4L471.8 427.2L471.6 427.1L471.5 427L471.4 426.9L471.3 426.7L471.3 426.6" stroke-width="0.8"/>
<path d="M478.5 429.5L478.5 429.6L478.4 429.8L478.3 429.9L478.2 430L478 430.1L477.8 430.3L477.6 430.4L477.3 430.5L477 430.6L476.7 430.6L476.4 430.7L476 430.7L475.6 430.8L475.3 430.8L474.9 430.8L474.5 430.8L474.2 430.8L473.8 430.7L473.4 430.7L473.1 430.6L472.8 430.6L472.5 430.5L472.2 430.4L472 430.3L471.8 430.1L471.6 430L471.5 429.9L471.4 429.8L471.3 429.6L471.3 429.5" stroke-width="0.8"/>
<path d="M478.5 432.4L478.5 432.5L478.4 432.7L478.3 432.8L478.2 432.9L478 433.1L477.8 433.2L477.6 433.3L477.3 433.4L477 433.5L476.7 433.5L476.4 433.6L476 433.6L475.6 433.7L475.3 433.7L474.9 433.7L474.5 433.7L474.2 433.7L473.8 433.6L473.4 433.6L473.1 433.5L472.8 433.5L472.5 433.4L472.2 433.3L472 433.2L471.8 433.1L471.6 432.9L471.5 432.8L471.4 432.7L471.3 432.5L471.3 432.4" stroke-width="0.8"/>
<path d="M478.5 435.3L478.5 435.4L478.4 435.6L478.3 435.7L478.2 435.8L478 435.9L477.8 436.1L477.6 436.2L477.3 436.3L477 436.4L476.7 436.4L476.4 436.5L476 436.5L475.6 436.6L475.3 436.6L474.9 436.6L474.5 436.6L474.2 436.6L473.8 436.5L473.4 436.5L473.1 436.4L472.8 436.4L472.5 436.3L472.2 436.2L472 436.1L471.8 435.9L471.6 435.8L471.5 435.7L471.4 435.6L471.3 435.4L471.3 435.3" stroke-width="0.8"/>
<path d="M478.5 438.2L478.5 438.3L478.4 438.5L478.3 438.6L478.2 438.7L478 438.8L477.8 439L477.6 439.1L477.3 439.2L477 439.3L476.7 439.3L476.4 439.4L476 439.4L475.6 439.5L475.3 439.5L474.9 439.5L474.5 439.5L474.2 439.5L473.8 439.4L473.4 439.4L473.1 439.3L472.8 439.3L472.5 439.2L472.2 439.1L472 439L471.8 438.8L471.6 438.7L471.5 438.6L471.4 438.5L471.3 438.3L471.3 438.2" stroke-width="0.8"/>
<path d="M478.3 438.6L478.3 438.7L478.2 438.9L478.1 439L478 439.2L477.8 439.3L477.7 439.4L477.4 439.5L477.2 439.6L476.9 439.7L476.6 439.8L476.3 439.9L476 439.9L475.6 440L475.3 440L474.9 440L474.5 440L474.2 440L473.8 439.9L473.5 439.9L473.2 439.8L472.9 439.7L472.6 439.6L472.4 439.5L472.1 439.4L472 439.3L471.8 439.2L471.7 439L471.6 438.9L471.5 438.7L471.5 438.6"/>
<path d="M475.5 445L475.5 489.9" stroke-width="1" stroke="#333"/>
<path d="M445.3 498.8C447.2 498.7 447.1 498.5 451 498.4C454.9 498.3 452.7 498 457 498.6C461.3 499.2 459.1 498.9 464 500.2C468.9 501.5 467.1 500.8 471.6 502.5C476.1 504.2 473.7 503.2 477.6 505.4C481.5 507.6 479.9 506.4 483.4 509C486.9 511.6 485.1 510.3 488 513.2C490.9 516.1 489.8 514.8 492.1 517.8C494.4 520.8 493.3 519.3 494.8 522.2C496.3 525.1 495.8 524.1 496.5 526.6C497.2 529.1 497 527.6 497 529.6C497 531.6 497 530.5 496.5 532.5C496 534.5 496.3 533.6 495.6 535.6C494.9 537.6 494.7 537.5 494.3 538.4"/>
<path d="M445.3 498.8L445.8 518L446.4 536.9"/>
<path d="M446.4 536.9C446.8 537.4 445.6 537.7 447.5 538.4C449.4 539.1 448.8 538.6 452 539.1C455.2 539.6 453.7 539.2 457 539.8C460.3 540.4 458.6 540.1 462 540.8C465.4 541.5 464.2 541.1 467.2 542C470.2 542.9 468.8 542.1 471 543.6C473.2 545.1 472.9 545.5 473.8 546.4"/>
<path d="M473.8 546.4L474.8 565L476 583.8L479 585.2"/>
<path d="M479 585.2C480.2 584.5 480.2 584.7 482.6 583.2C485 581.7 483.8 582.7 486.3 580.8C488.8 578.9 487.8 579.8 490.2 577.4C492.6 575 491.9 575.8 493.6 573.5C495.3 571.2 494.5 572.5 495.2 570.6C495.9 568.7 495.6 568.7 495.8 567.7"/>
<path d="M494.3 538.4L494.8 550L495.2 559L495.8 567.7"/>
<path d="M449.7 503.9C451.6 503.9 451.6 503.7 455.5 504C459.4 504.3 457.5 504 461.4 504.7C465.3 505.4 463.3 505 467.2 506.2C471.1 507.4 469.4 506.6 473.1 508.3C476.8 510 475 509.2 478.4 511.4C481.8 513.6 480.5 512.6 483.4 514.9C486.3 517.2 484.8 516 487 518.4C489.2 520.8 488.5 519.9 489.9 522.2C491.3 524.5 490.7 523.2 491.2 525.2C491.7 527.2 491.6 526.1 491.4 528.1C491.2 530.1 491.3 529.2 490.6 531.2C489.9 533.2 490.3 532.3 489.2 534C488.1 535.7 488.7 534.9 487.2 536.4C485.7 537.9 486.5 537.2 484.8 538.4C483.1 539.6 483.9 539 482 540C480.1 541 480 540.9 479 541.4"/>
<path d="M449.7 503.9L450 520L450.4 535.4"/>
<path d="M450.4 535.4C451.9 535.6 451.8 535.6 455 536.1C458.2 536.6 456.6 536.3 459.9 536.9C463.2 537.5 461.6 537.2 465 537.9C468.4 538.6 467 538.3 470.2 539.1C473.4 539.9 471.7 539.5 474.6 540.3C477.5 541.1 477.5 541.1 479 541.5"/>
<path d="M447.4 500.8C449.9 500.8 449.8 500.3 455 500.8C460.2 501.3 457.7 500.9 463 502.2C468.3 503.5 466 502.7 471 504.8C476 506.9 473.5 505.7 478 508.4C482.5 511.1 480.6 509.7 484.4 513C488.2 516.3 487.7 516.6 489.4 518.4" stroke-width="0.6" stroke="#666"/>
<path d="M473.8 546.4C474.9 546.1 474.8 546.1 477 545.4C479.2 544.7 477.7 545.2 480.4 544.2C483.1 543.2 482 543.7 485 542.4C488 541.1 486.5 541.7 489.4 540.4C492.3 539.1 492.2 539.1 493.6 538.4"/>
<path d="M479 548.6L479.8 565L480.4 580.8"/>
<path d="M479 548.6C480.3 548.2 480.2 548.4 483 547.4C485.8 546.4 484.5 547 487.4 545.6C490.3 544.2 490.2 544 491.6 543.2" stroke-width="0.8"/>
<path d="M480.4 580.8C481.8 579.9 481.9 579.9 484.6 578C487.3 576.1 486.1 577 488.6 575C491.1 573 490.9 573 492.1 572" stroke-width="0.8"/>
<path d="M476.4 548L477.6 583" stroke-width="0.6" stroke="#666"/>
<path d="M456.4 507.4L468 508M456.4 509.2L468 509.8M456.4 511L468 511.6M456.4 512.8L468 513.4M456.4 514.6L468 515.2M456.4 516.4L468 517M457 507L457.2 516.6M459.1 507.1L459.3 516.7M461.2 507.2L461.4 516.8M463.3 507.3L463.5 516.9M465.4 507.4L465.6 517M467.5 507.5L467.7 517.1" stroke-width="0.8" stroke="#333" stroke-dasharray="1.2 0.6"/>
<path d="M481 564.6L491.6 559M481 566.6L491.6 561M481 568.6L491.6 563M481 570.6L491.6 565M481 572.6L491.6 567M481 574.6L491.6 569M481 576.6L491.6 571M481 578.6L491.6 573M481.8 563.4L482 578.6M483.7 562.4L483.9 577.3M485.6 561.4L485.8 576M487.5 560.4L487.7 574.7M489.4 559.4L489.6 573.4M491.3 558.4L491.5 572.1" stroke-width="0.8" stroke="#333" stroke-dasharray="1.2 0.6"/>
<path d="M494 556.5L494.8 569" stroke-width="1.4" stroke="#444"/>
<rect x="587.4" y="555.6" width="28.4" height="9" rx="4.5" ry="4.5" transform="rotate(-22 601.6 560.1)" stroke-width="2" stroke="#111"/>
<path d="M648 344.4L670.4 425.7L674.3 438.9"/>
<path d="M684 337L698 430L699.1 436.2"/>
<path d="M682.2 331.4L682.7 332.3L682.9 333.1L683.1 334L683.1 334.9L682.9 335.8L682.6 336.8L682.1 337.7L681.5 338.6L680.7 339.6L679.9 340.4L678.8 341.3L677.7 342.1L676.5 342.9L675.1 343.6L673.7 344.3L672.2 344.9L670.6 345.5L669 346L667.3 346.4L665.7 346.7L663.9 347L662.2 347.2L660.6 347.3L658.9 347.3L657.3 347.2L655.7 347.1L654.2 346.8L652.7 346.5L651.4 346.1L650.2 345.7L649 345.1L648 344.5L647.1 343.9L646.4 343.2L645.7 342.4L645.3 341.6L644.9 340.7L644.7 339.9L644.7 338.9L644.8 338L644.8 328L645.1 327.1L645.6 326.1L646.2 325.2L646.9 324.2L647.8 323.3L648.8 322.4L649.9 321.6L651.2 320.8L652.5 320L653.9 319.3L655.5 318.7L657.1 318.1L658.7 317.6L660.4 317.2L662.1 316.9L663.9 316.6L665.6 316.4L667.3 316.3L669 316.3L670.7 316.4L672.3 316.5L673.8 316.8L675.3 317.1L676.6 317.5L677.9 318L679 318.6L680 319.2L680.9 319.9L681.6 320.6L682.2 321.4Z" fill="#fff" stroke="none"/>
<path d="M682.2 331.4L682.7 332.3L682.9 333.1L683.1 334L683.1 334.9L682.9 335.8L682.6 336.8L682.1 337.7L681.5 338.6L680.7 339.6L679.9 340.4L678.8 341.3L677.7 342.1L676.5 342.9L675.1 343.6L673.7 344.3L672.2 344.9L670.6 345.5L669 346L667.3 346.4L665.7 346.7L663.9 347L662.2 347.2L660.6 347.3L658.9 347.3L657.3 347.2L655.7 347.1L654.2 346.8L652.7 346.5L651.4 346.1L650.2 345.7L649 345.1L648 344.5L647.1 343.9L646.4 343.2L645.7 342.4L645.3 341.6L644.9 340.7L644.7 339.9L644.7 338.9L644.8 338"/>
<path d="M683 328L683.4 328.8L683.7 329.7L683.9 330.6L683.8 331.5L683.7 332.4L683.3 333.3L682.8 334.3L682.2 335.2L681.4 336.1L680.5 337L679.4 337.9L678.2 338.7L676.9 339.5L675.5 340.3L674 341L672.5 341.6L670.8 342.2L669.1 342.7L667.4 343.1L665.7 343.4L663.9 343.7L662.1 343.9L660.3 344L658.6 344L656.9 344L655.3 343.8L653.7 343.6L652.2 343.3L650.8 342.9L649.5 342.5L648.4 342L647.3 341.4L646.4 340.7L645.6 340L645 339.2L644.5 338.4L644.1 337.6L644 336.7L643.9 335.8L644.1 334.9L644.1 328.2L644.4 327.2L644.8 326.3L645.5 325.3L646.2 324.4L647.1 323.4L648.2 322.5L649.4 321.7L650.7 320.9L652.1 320.1L653.6 319.4L655.2 318.7L656.9 318.2L658.6 317.7L660.4 317.2L662.1 316.9L664 316.6L665.8 316.4L667.6 316.3L669.3 316.3L671 316.3L672.7 316.5L674.3 316.7L675.8 317L677.2 317.4L678.5 317.9L679.7 318.5L680.7 319.1L681.6 319.8L682.4 320.5L683 321.3Z" fill="#fff" stroke="none"/>
<path d="M683 328L683.4 328.8L683.7 329.7L683.9 330.6L683.8 331.5L683.7 332.4L683.3 333.3L682.8 334.3L682.2 335.2L681.4 336.1L680.5 337L679.4 337.9L678.2 338.7L676.9 339.5L675.5 340.3L674 341L672.5 341.6L670.8 342.2L669.1 342.7L667.4 343.1L665.7 343.4L663.9 343.7L662.1 343.9L660.3 344L658.6 344L656.9 344L655.3 343.8L653.7 343.6L652.2 343.3L650.8 342.9L649.5 342.5L648.4 342L647.3 341.4L646.4 340.7L645.6 340L645 339.2L644.5 338.4L644.1 337.6L644 336.7L643.9 335.8L644.1 334.9"/>
<path d="M683.6 324.5L684 325.3L684.3 326.2L684.5 327.1L684.4 328L684.2 328.9L683.9 329.8L683.4 330.8L682.7 331.7L681.9 332.6L680.9 333.6L679.8 334.4L678.6 335.3L677.3 336.1L675.8 336.8L674.3 337.5L672.7 338.2L671 338.7L669.3 339.2L667.5 339.7L665.7 340L663.8 340.3L662 340.5L660.2 340.6L658.4 340.7L656.7 340.6L655 340.5L653.4 340.3L651.8 340L650.4 339.6L649.1 339.2L647.9 338.6L646.8 338.1L645.8 337.4L645 336.7L644.4 335.9L643.9 335.1L643.6 334.3L643.4 333.4L643.4 332.5L643.5 331.6L643.5 328.3L643.8 327.3L644.3 326.3L644.9 325.4L645.7 324.4L646.7 323.5L647.8 322.6L649 321.8L650.3 320.9L651.8 320.2L653.3 319.4L655 318.8L656.7 318.2L658.5 317.7L660.3 317.2L662.1 316.9L664 316.6L665.9 316.4L667.7 316.2L669.5 316.2L671.3 316.3L673 316.4L674.6 316.7L676.2 317L677.6 317.4L679 317.8L680.2 318.4L681.2 319L682.2 319.7L682.9 320.4L683.6 321.2Z" fill="#fff" stroke="none"/>
<path d="M683.6 324.5L684 325.3L684.3 326.2L684.5 327.1L684.4 328L684.2 328.9L683.9 329.8L683.4 330.8L682.7 331.7L681.9 332.6L680.9 333.6L679.8 334.4L678.6 335.3L677.3 336.1L675.8 336.8L674.3 337.5L672.7 338.2L671 338.7L669.3 339.2L667.5 339.7L665.7 340L663.8 340.3L662 340.5L660.2 340.6L658.4 340.7L656.7 340.6L655 340.5L653.4 340.3L651.8 340L650.4 339.6L649.1 339.2L647.9 338.6L646.8 338.1L645.8 337.4L645 336.7L644.4 335.9L643.9 335.1L643.6 334.3L643.4 333.4L643.4 332.5L643.5 331.6"/>
<path d="M684.6 323.2L684.7 324.2L684.5 325.3L684.1 326.4L683.5 327.5L682.7 328.6L681.7 329.7L680.4 330.7L679 331.8L677.5 332.7L675.8 333.6L673.9 334.4L672 335.1L669.9 335.8L667.8 336.3L665.7 336.7L663.5 337.1L661.3 337.3L659.2 337.4L657.1 337.4L655.1 337.2L653.2 337L651.4 336.6L649.7 336.2L648.2 335.6L646.9 334.9L645.7 334.2L644.8 333.3L644 332.4L643.5 331.5L643.2 330.4L643.1 329.4L643.3 328.3L643.7 327.2L644.3 326.1L645.1 325L646.1 323.9L647.4 322.9L648.8 321.8L650.3 320.9L652 320L653.9 319.2L655.8 318.5L657.9 317.8L660 317.3L662.1 316.9L664.3 316.5L666.5 316.3L668.6 316.2L670.7 316.2L672.7 316.4L674.6 316.6L676.4 317L678.1 317.4L679.6 318L680.9 318.7L682.1 319.4L683 320.3L683.8 321.2L684.3 322.1L684.6 323.2Z" fill="#fff"/>
<path d="M678.4 322.4L678.4 323.1L678.3 323.9L678 324.7L677.5 325.5L676.9 326.3L676.2 327L675.2 327.8L674.2 328.5L673 329.2L671.7 329.8L670.4 330.4L668.9 330.9L667.4 331.4L665.8 331.8L664.2 332.1L662.6 332.3L661 332.5L659.4 332.6L657.9 332.6L656.4 332.5L655 332.3L653.6 332.1L652.4 331.8L651.3 331.4L650.3 330.9L649.5 330.4L648.8 329.8L648.2 329.2L647.9 328.5L647.6 327.8L647.6 327.1L647.7 326.3L648 325.5L648.5 324.7L649.1 323.9L649.8 323.2L650.8 322.4L651.8 321.7L653 321L654.3 320.4L655.6 319.8L657.1 319.3L658.6 318.8L660.2 318.4L661.8 318.1L663.4 317.9L665 317.7L666.6 317.6L668.1 317.6L669.6 317.7L671 317.9L672.4 318.1L673.6 318.4L674.7 318.8L675.7 319.3L676.5 319.8L677.2 320.4L677.8 321L678.1 321.7L678.4 322.4Z"/>
<path d="M651.3 331.6L650.7 331.3L650.1 330.8L649.6 330.4L649.2 329.9L649 329.4L648.8 328.9L648.8 328.3L648.9 327.8L649 327.2L649.3 326.6L649.7 326L650.2 325.4L650.8 324.8L651.5 324.3L652.3 323.7L653.2 323.2L654.1 322.7L655.2 322.2L656.2 321.8L657.4 321.3L658.6 321L659.8 320.6L661 320.3L662.3 320.1L663.6 319.9L664.9 319.7L666.1 319.6L667.4 319.6L668.6 319.6L669.7 319.6" stroke-width="0.7"/>
<path d="M675.6 334.8L674.4 335.3L673.2 335.8L672 336.3L670.7 336.7L669.4 337.1L668.1 337.4L666.8 337.7L665.4 338L664.1 338.2L662.7 338.4L661.3 338.5L660 338.5L658.7 338.6L657.4 338.5L656.1 338.5L654.8 338.4L653.6 338.2L652.5 338L651.4 337.7L650.3 337.4L649.4 337.1L648.4 336.7L647.6 336.3L646.8 335.8L646.1 335.3L645.5 334.8L644.9 334.3L644.5 333.7L644.1 333.1L643.8 332.4" stroke-width="0.7"/>
<path d="M675.8 293.1L675.9 294.2L675.7 295.3L675.4 296.4L674.8 297.5L674.1 298.6L673.1 299.7L672 300.7L670.7 301.7L669.3 302.6L667.8 303.4L666.1 304.1L664.3 304.8L662.5 305.3L660.6 305.8L658.7 306.1L656.7 306.3L654.8 306.4L652.8 306.4L651 306.3L649.2 306L647.4 305.6L645.8 305.2L644.3 304.6L643 303.9L641.8 303.2L640.8 302.3L639.9 301.4L639.3 300.4L638.8 299.4L638.6 298.3L638.5 297.2L638.7 296.1L639 295L639.6 293.9L640.3 292.8L641.3 291.7L642.4 290.7L643.7 289.7L645.1 288.8L646.6 288L648.3 287.3L650.1 286.6L651.9 286.1L653.8 285.6L655.7 285.3L657.7 285.1L659.6 285L661.6 285L663.4 285.1L665.2 285.4L667 285.8L668.6 286.2L670.1 286.8L671.4 287.5L672.6 288.2L673.6 289.1L674.5 290L675.1 291L675.6 292L675.8 293.1Z" fill="#fff"/>
<path d="M671.5 292.9L671.5 293.8L671.3 294.8L670.8 295.7L670.2 296.6L669.4 297.5L668.3 298.3L667.1 299.1L665.8 299.9L664.3 300.5L662.7 301.1L661 301.5L659.3 301.9L657.5 302.1L655.7 302.3L654 302.3L652.3 302.2L650.7 302L649.2 301.7L647.8 301.2L646.6 300.7L645.6 300.1L644.7 299.4L644 298.6L643.6 297.8L643.3 296.9L643.3 296L643.5 295L644 294.1L644.6 293.2L645.4 292.3L646.5 291.5L647.7 290.7L649 289.9L650.5 289.3L652.1 288.7L653.8 288.3L655.5 287.9L657.3 287.7L659.1 287.5L660.8 287.5L662.5 287.6L664.1 287.8L665.6 288.1L667 288.6L668.2 289.1L669.2 289.7L670.1 290.4L670.8 291.2L671.2 292L671.5 292.9Z"/>
<path d="M644.5 297.4L644.7 296.4L645.2 295.5L645.9 294.5L646.9 293.6L648.2 292.7L649.6 291.9L651.3 291.2L653.1 290.6L655 290.1L656.9 289.8L658.9 289.6L660.8 289.5L662.7 289.6L664.5 289.8L666.1 290.2L667.6 290.7L668.8 291.3L669.8 292L670.5 292.8L670.9 293.7" stroke-width="0.7"/>
<path d="M650.2 274.4L655.5 273.8L666.9 328.1L661.4 329.3Z" fill="#fff" stroke="none"/>
<path d="M650.2 274.4L661.4 329.3M655.5 273.8L666.9 328.1"/>
<path d="M675.9 295.2L675.8 296L675.7 296.8L675.4 297.6L675.1 298.4L674.6 299.2L674.1 300L673.4 300.8L672.7 301.5L671.9 302.2L671 302.9L670 303.6L668.9 304.2L667.8 304.8L666.6 305.3L665.4 305.8L664.1 306.3L662.8 306.7L661.4 307L660.1 307.3L658.7 307.5L657.3 307.7L655.9 307.8L654.5 307.8L653.1 307.8L651.7 307.7L650.4 307.6L649.1 307.4L647.9 307.2L646.7 306.9L645.6 306.5L644.5 306.1L643.5 305.6L642.6 305.1L641.8 304.5L641 303.9L640.4 303.3L639.8 302.6L639.4 301.9L639 301.2L638.7 300.4L643.4 297.4L643.6 297.9L643.9 298.4L644.2 298.9L644.7 299.3L645.1 299.8L645.7 300.2L646.3 300.5L647 300.9L647.7 301.2L648.5 301.5L649.4 301.7L650.3 301.9L651.2 302.1L652.2 302.2L653.2 302.3L654.2 302.3L655.2 302.3L656.3 302.2L657.3 302.2L658.4 302L659.5 301.9L660.5 301.7L661.5 301.4L662.5 301.1L663.5 300.8L664.4 300.5L665.3 300.1L666.2 299.7L667 299.2L667.7 298.8L668.4 298.3L669 297.8L669.6 297.3L670.1 296.7L670.5 296.2L670.9 295.6L671.1 295.1L671.3 294.5L671.5 294L671.5 293.4Z" fill="#fff" stroke="none"/>
<path d="M675.8 293.1L675.9 293.9L675.8 294.7L675.6 295.6L675.4 296.4L675 297.3L674.5 298.1L673.8 298.9L673.1 299.7L672.3 300.5L671.4 301.2L670.4 301.9L669.3 302.6L668.2 303.2L667 303.8L665.7 304.3L664.3 304.8L663 305.2L661.6 305.6L660.1 305.9L658.7 306.1L657.2 306.3L655.7 306.4L654.3 306.4L652.8 306.4L651.4 306.3L650.1 306.2L648.7 305.9L647.4 305.6L646.2 305.3L645.1 304.9L644 304.4L643 303.9L642.1 303.4L641.3 302.8L640.6 302.1L639.9 301.4L639.4 300.7L639 299.9L638.8 299.1L638.6 298.3"/>
<path d="M675.8 295.6L675.7 296.4L675.5 297.2L675.2 297.9L674.8 298.7L674.4 299.5L673.8 300.3L673.1 301L672.4 301.7L671.6 302.4L670.7 303.1L669.7 303.7L668.7 304.3L667.6 304.9L666.4 305.4L665.2 305.9L664 306.3L662.7 306.7L661.4 307L660 307.3L658.7 307.5L657.3 307.7L655.9 307.8L654.6 307.8L653.2 307.8L651.9 307.7L650.6 307.6L649.4 307.4L648.2 307.2L647 306.9L645.9 306.6L644.8 306.2L643.9 305.7L643 305.2L642.1 304.7L641.4 304.1L640.7 303.5L640.1 302.9L639.6 302.2L639.2 301.5L638.9 300.8" stroke-width="0.8"/>
<path d="M671.5 293.4L671.5 294L671.3 294.5L671.1 295.1L670.9 295.6L670.5 296.2L670.1 296.7L669.6 297.3L669 297.8L668.4 298.3L667.7 298.8L667 299.2L666.2 299.7L665.3 300.1L664.4 300.5L663.5 300.8L662.5 301.1L661.5 301.4L660.5 301.7L659.5 301.9L658.4 302L657.3 302.2L656.3 302.2L655.2 302.3L654.2 302.3L653.2 302.3L652.2 302.2L651.2 302.1L650.3 301.9L649.4 301.7L648.5 301.5L647.7 301.2L647 300.9L646.3 300.5L645.7 300.2L645.1 299.8L644.7 299.3L644.2 298.9L643.9 298.4L643.6 297.9L643.4 297.4"/>
<path d="M623.4 254.5L623.5 253.3L624 252.1L624.7 250.8L625.6 249.6L626.8 248.4L628.3 247.3L630 246.1L631.9 245.1L633.9 244.1L636.2 243.2L638.6 242.4L641.1 241.7L643.7 241.1L646.3 240.6L649 240.2L651.7 240L654.3 239.9L656.9 239.9L659.4 240L661.8 240.3L664 240.7L666.1 241.2L668 241.8L669.7 242.6L671.2 243.4L672.4 244.3L673.3 245.3L674 246.4L674.5 247.5L674.6 248.7L674.3 259.6L674.2 260.5L674 261.4L673.6 262.3L673.1 263.2L672.4 264.2L671.6 265.1L670.6 265.9L669.6 266.8L668.3 267.7L667 268.5L665.6 269.2L664 270L662.4 270.6L660.7 271.3L658.9 271.8L657.1 272.4L655.2 272.8L653.3 273.2L651.3 273.5L649.3 273.8L647.4 274L645.4 274.1L643.5 274.1L641.6 274.1L639.8 274L638 273.8L636.3 273.6L634.6 273.3L633.1 272.9L631.7 272.4L630.3 271.9L629.1 271.4L628 270.8L627 270.1L626.2 269.4L625.5 268.6L625 267.8L624.6 267L624.4 266.1L624.3 265.2Z" fill="#fff" stroke="none"/>
<path d="M623.4 254.5L624.3 265.2M674.6 248.7L674.3 259.6"/>
<path d="M674.5 248L674.6 249L674.4 250L674.1 251L673.5 252.1L672.8 253.1L671.9 254.1L670.8 255.1L669.6 256L668.2 257L666.6 257.9L664.9 258.7L663.1 259.5L661.2 260.2L659.2 260.9L657.1 261.5L655 262L652.8 262.4L650.6 262.8L648.3 263.1L646.1 263.2L643.9 263.3L641.7 263.3L639.6 263.3L637.6 263.1L635.6 262.8L633.8 262.5L632 262.1L630.4 261.5L629 261L627.7 260.3L626.5 259.6L625.5 258.8L624.7 258L624.1 257.1L623.7 256.2L623.5 255.2L623.4 254.2L623.6 253.2L623.9 252.2L624.5 251.1L625.2 250.1L626.1 249.1L627.2 248.1L628.4 247.2L629.8 246.2L631.4 245.3L633.1 244.5L634.9 243.7L636.8 243L638.8 242.3L640.9 241.7L643 241.2L645.2 240.8L647.4 240.4L649.7 240.1L651.9 240L654.1 239.9L656.3 239.9L658.4 239.9L660.4 240.1L662.4 240.4L664.2 240.7L666 241.1L667.6 241.7L669 242.2L670.3 242.9L671.5 243.6L672.5 244.4L673.3 245.2L673.9 246.1L674.3 247L674.5 248Z" stroke-width="1.2" stroke-dasharray="1.5 0.8" stroke="#333"/>
<path d="M674.3 259.6L674.2 260.5L674 261.4L673.6 262.3L673.1 263.2L672.4 264.2L671.6 265.1L670.6 265.9L669.6 266.8L668.3 267.7L667 268.5L665.6 269.2L664 270L662.4 270.6L660.7 271.3L658.9 271.8L657.1 272.4L655.2 272.8L653.3 273.2L651.3 273.5L649.3 273.8L647.4 274L645.4 274.1L643.5 274.1L641.6 274.1L639.8 274L638 273.8L636.3 273.6L634.6 273.3L633.1 272.9L631.7 272.4L630.3 271.9L629.1 271.4L628 270.8L627 270.1L626.2 269.4L625.5 268.6L625 267.8L624.6 267L624.4 266.1L624.3 265.2" stroke-width="1.2"/>
<ellipse cx="648.8" cy="251.6" rx="23" ry="9.6" transform="rotate(-8 648.8 251.6)" fill="#fff"/>
<path d="M674.3 250.4L671.7 258.6M674 251.8L671.4 260M673.3 253.2L670.8 261.4M672.2 254.6L669.8 262.8M670.8 256L668.5 264.2M669.1 257.3L666.9 265.5M667.1 258.5L665 266.7M664.8 259.7L662.9 267.9M662.3 260.8L660.6 269M659.6 261.7L658 269.9M656.7 262.5L655.4 270.7M653.8 263.2L652.6 271.4M650.7 263.7L649.7 271.9M647.7 264L646.9 272.2M644.6 264.2L644 272.4M641.7 264.2L641.2 272.4M638.8 264.1L638.5 272.3M636.1 263.7L636 271.9M633.6 263.3L633.6 271.5M631.3 262.6L631.5 270.8M629.3 261.8L629.6 270M627.6 260.9L628 269.1M626.2 259.8L626.7 268M625.1 258.7L625.7 266.9M624.4 257.4L625 265.6M624.1 256.1L624.7 264.3" stroke-width="0.9" stroke="#444"/>
<path d="M588 404.2L580.5 401.5L581.7 392.2L586.8 384.3L594.3 387" fill="#fff"/>
<path d="M581.7 392.2L589.2 394.9" stroke-width="0.8"/>
<path d="M580.5 401.5L581.7 392.2L586.8 384.3" stroke-width="0.9"/>
<path d="M582.4 400.3L582.4 399.2L582.5 398.1L582.6 396.8L582.9 395.6L583.3 394.2L583.7 392.9L584.2 391.6L584.8 390.4L585.4 389.2L586.1 388.2L586.8 387.2L587.4 386.4" stroke-width="0.6"/>
<path d="M590.2 408.4L589.7 408.4L589.2 408.2L588.8 407.8L588.4 407.4L588.1 406.7L587.9 406L587.8 405.1L587.7 404.1L587.8 402.9L587.9 401.7L588.1 400.5L588.3 399.1L588.7 397.8L589.1 396.4L589.5 395L590.1 393.7L590.6 392.4L591.3 391.1L591.9 389.9L592.6 388.8L593.3 387.8L594 387L594.6 386.2L595.3 385.6L596 385.2L596.6 384.9L597.2 384.7L597.7 384.7L598.2 384.9L598.6 385.2L600.5 385.9L600.1 385.6L599.6 385.4L599.1 385.4L598.5 385.5L597.8 385.8L597.2 386.3L596.5 386.9L595.8 387.6L595.1 388.5L594.5 389.5L593.8 390.6L593.1 391.8L592.5 393.1L592 394.4L591.4 395.7L591 397.1L590.6 398.5L590.2 399.8L589.9 401.2L589.8 402.4L589.6 403.6L589.6 404.7L589.7 405.7L589.8 406.6L590 407.4L590.3 408L590.6 408.5L591.1 408.9L591.5 409L592.1 409.1Z" fill="#fff" stroke="none"/>
<path d="M590.2 408.4L589.7 408.4L589.2 408.2L588.8 407.8L588.4 407.4L588.1 406.7L587.9 406L587.8 405.1L587.7 404.1L587.8 402.9L587.9 401.7L588.1 400.5L588.3 399.1L588.7 397.8L589.1 396.4L589.5 395L590.1 393.7L590.6 392.4L591.3 391.1L591.9 389.9L592.6 388.8L593.3 387.8L594 387L594.6 386.2L595.3 385.6L596 385.2L596.6 384.9L597.2 384.7L597.7 384.7L598.2 384.9L598.6 385.2"/>
<path d="M599.7 398.7L599.1 400.2L598.5 401.6L597.8 402.9L597.1 404.2L596.4 405.3L595.6 406.4L594.9 407.2L594.2 407.9L593.5 408.5L592.8 408.9L592.1 409L591.6 409L591 408.9L590.6 408.5L590.2 407.9L589.9 407.2L589.7 406.3L589.6 405.3L589.6 404.2L589.7 402.9L589.9 401.6L590.1 400.2L590.5 398.7L590.9 397.2L591.4 395.7L592 394.3L592.6 392.8L593.3 391.5L594 390.2L594.7 389.1L595.5 388.1L596.2 387.2L597 386.5L597.7 386L598.3 385.6L599 385.4L599.6 385.4L600.1 385.6L600.5 386L600.9 386.5L601.2 387.2L601.4 388.1L601.5 389.1L601.5 390.3L601.4 391.5L601.2 392.9L601 394.3L600.6 395.8L600.2 397.2L599.7 398.7Z" fill="#fff"/>
<path d="M594 405.7L593.5 405.5L593 405.1L592.6 404.8L592.2 404.3L591.9 403.7L591.7 403.1L591.4 402.4L591.3 401.7L591.2 401L591.2 400.2L591.2 399.3L591.3 398.5L591.5 397.6L591.7 396.8L592 395.9L592.3 395.1L592.7 394.3L593.1 393.5L593.6 392.8L594.1 392.2L594.6 391.6L595.2 391L595.8 390.6L596.4 390.2L597 389.9L597.5 389.7L598.1 389.6L598.7 389.5L599.3 389.6L599.8 389.7L611.1 393.8L611.6 394.1L612 394.4L612.4 394.8L612.8 395.2L613.1 395.8L613.4 396.4L613.6 397.1L613.7 397.8L613.8 398.6L613.8 399.4L613.8 400.2L613.7 401L613.5 401.9L613.3 402.7L613 403.6L612.7 404.4L612.3 405.2L611.9 406L611.4 406.7L610.9 407.3L610.4 407.9L609.8 408.5L609.3 408.9L608.7 409.3L608.1 409.6L607.5 409.8L606.9 410L606.3 410L605.8 409.9L605.2 409.8Z" fill="#fff" stroke="none"/>
<path d="M599.8 389.7L611.1 393.8M594 405.7L605.2 409.8"/>
<path d="M596.8 406.7L596.3 406.5L595.8 406.3L595.3 405.9L594.9 405.5L594.5 404.9L594.2 404.3L594 403.6L593.8 402.9L593.7 402.1L593.6 401.3L593.7 400.4L593.8 399.5L593.9 398.6L594.1 397.7L594.4 396.8L594.8 395.9L595.2 395.1L595.6 394.3L596.1 393.6L596.7 392.9L597.3 392.3L597.9 391.7L598.5 391.3L599.1 390.9L599.7 390.7L600.3 390.5L601 390.4L601.5 390.4L602.1 390.6L602.6 390.8" stroke-width="0.9"/>
<path d="M599.1 407.5L598.6 407.4L598 407.1L597.6 406.7L597.2 406.3L596.8 405.8L596.5 405.1L596.2 404.5L596 403.7L595.9 402.9L595.9 402.1L595.9 401.2L596 400.3L596.2 399.4L596.4 398.5L596.7 397.6L597 396.8L597.4 395.9L597.9 395.1L598.4 394.4L598.9 393.7L599.5 393.1L600.1 392.6L600.7 392.1L601.4 391.7L602 391.5L602.6 391.3L603.2 391.2L603.8 391.3L604.4 391.4L604.9 391.6" stroke-width="0.9"/>
<path d="M601.4 408.3L600.8 408.2L600.3 407.9L599.8 407.6L599.4 407.1L599 406.6L598.7 406L598.5 405.3L598.3 404.5L598.2 403.8L598.1 402.9L598.2 402L598.3 401.2L598.4 400.3L598.7 399.3L598.9 398.5L599.3 397.6L599.7 396.7L600.2 396L600.7 395.2L601.2 394.5L601.8 393.9L602.4 393.4L603 392.9L603.6 392.6L604.2 392.3L604.9 392.1L605.5 392.1L606.1 392.1L606.6 392.2L607.2 392.4" stroke-width="0.9"/>
<path d="M603.6 409.2L603.1 409L602.6 408.7L602.1 408.4L601.7 407.9L601.3 407.4L601 406.8L600.7 406.1L600.6 405.4L600.4 404.6L600.4 403.7L600.4 402.9L600.5 402L600.7 401.1L600.9 400.2L601.2 399.3L601.5 398.4L602 397.6L602.4 396.8L602.9 396L603.5 395.3L604 394.7L604.6 394.2L605.2 393.8L605.9 393.4L606.5 393.1L607.1 392.9L607.7 392.9L608.3 392.9L608.9 393L609.4 393.3" stroke-width="0.9"/>
<path d="M594.8 406L594.2 405.8L593.7 405.5L593.2 405.2L592.8 404.7L592.5 404.2L592.2 403.6L591.9 402.9L591.7 402.2L591.6 401.4L591.6 400.5L591.6 399.7L591.7 398.8L591.8 397.9L592.1 397L592.4 396.1L592.7 395.2L593.1 394.4L593.6 393.6L594.1 392.8L594.6 392.1L595.2 391.5L595.8 391L596.4 390.5L597 390.2L597.7 389.9L598.3 389.7L598.9 389.7L599.5 389.7L600 389.8L600.6 390" stroke-width="0.9"/>
<path d="M613 403.6L612.5 404.8L611.9 406L611.2 407L610.4 407.9L609.6 408.7L608.7 409.3L607.8 409.7L606.9 410L606 410L605.2 409.8L604.5 409.4L603.9 408.9L603.3 408.1L602.9 407.2L602.6 406.2L602.5 405.1L602.5 403.9L602.6 402.6L602.9 401.3L603.3 400L603.8 398.8L604.4 397.6L605.1 396.6L605.9 395.7L606.8 394.9L607.6 394.3L608.5 393.9L609.4 393.7L610.3 393.6L611.1 393.8L611.8 394.2L612.4 394.8L613 395.5L613.4 396.4L613.7 397.4L613.8 398.6L613.8 399.8L613.7 401L613.4 402.3L613 403.6Z" fill="#fff"/>
<ellipse cx="625.8" cy="412.4" rx="8.8" ry="12.6" transform="rotate(20 625.8 412.4)"/>
<ellipse cx="625.9" cy="412.4" rx="6.6" ry="10.2" transform="rotate(20 625.9 412.4)"/>
<path d="M669.4 425.1C667.9 423.1 668.1 422.6 664.8 419C661.5 415.4 663.4 416.7 659.6 414.4C655.8 412.1 657.4 412.4 653.5 412.1C649.6 411.8 651.5 411.4 648 413.4C644.5 415.4 645.9 414.3 643 418C640.1 421.7 641 420 639.2 424.6C637.4 429.2 637.7 427.8 637.5 431.8C637.3 435.8 637.3 434.1 638.6 436.6C639.9 439.1 639.2 437.9 641.4 439.4C643.6 440.9 643.9 440.5 645.2 441"/>
<path d="M655.4 418C653.9 419.5 653.7 419.2 651 422.4C648.3 425.6 649.2 424.1 647.2 427.6C645.2 431.1 645.8 429.7 645 433C644.2 436.3 644.5 434.8 644.7 437.4C644.9 440 645.3 439.7 645.6 440.8"/>
<path d="M646.4 426.4C645.7 427.9 645.2 428 644.4 431C643.6 434 644.1 433.9 644 435.4" stroke-width="1.4" stroke="#666"/>
<path d="M656 417.4L670 427.2M655.8 419.2L670.4 429M656.8 421.6L670.8 431" stroke-width="0.8"/>
<path d="M656.4 416.6C657.3 416.4 657.3 415.7 659 416C660.7 416.3 660.1 416.1 661.6 417.4C663.1 418.7 662.8 419.1 663.4 420" stroke-width="0.8"/>
<path d="M645.4 441L682.5 460.2"/>
<path d="M673.6 437.6C673.8 438.5 673.3 438.7 674.2 440.2C675.1 441.7 674.4 441 676.4 442.2C678.4 443.4 676.8 443.1 680.3 443.9C683.8 444.7 682.6 444.6 687 444.5C691.4 444.4 691.4 444 693.6 443.7"/>
<path d="M693.8 440.4L697.4 442.4L696.4 444.6" stroke-width="0.8"/>
<path d="M699.1 435.9C701.1 434.9 700.8 435 705 433C709.2 431 708.2 430.8 711.8 429.9C715.4 429 713.1 429.5 715.7 430.2C718.3 430.9 717 430.5 719.6 432C722.2 433.5 721.7 433 723.6 434.8C725.5 436.6 724.7 436.5 725.2 437.4"/>
<path d="M682.5 460.2C680.7 461.2 680.3 461.2 677 463.2C673.7 465.2 675 463.9 672.7 466.2C670.4 468.5 671.2 467.5 670.2 470C669.2 472.5 669.5 471.3 669.6 473.6C669.7 475.9 669 474.9 670.5 477C672 479.1 671.1 477.9 674 479.8C676.9 481.7 677.5 481.7 679.2 482.7"/>
<path d="M696.7 442.8L677.1 470" stroke-width="0.8"/>
<path d="M719.7 434.8C722 434.4 720.9 434.6 722.6 435.4C724.3 436.2 723.8 435.5 724.8 437.2C725.8 438.9 725.8 437.8 725.6 440.6C725.4 443.4 725.4 442.4 724.1 445.5C722.8 448.6 723.4 447.1 721.6 450C719.8 452.9 720.6 451.2 718.7 454.3C716.8 457.4 717.8 456.1 715.8 459.4C713.8 462.7 715.2 461.1 712.8 464.1C710.4 467.1 711.5 465.8 708.6 468.4C705.7 471 707.2 469.7 704 471.9C700.8 474.1 702.3 473 699 475C695.7 477 697.3 476 694.2 477.8C691.1 479.6 692.5 478.8 689.6 480.4C686.7 482 688.1 481.4 685.4 482.7C682.7 484 683.5 484.2 681.5 484.2C679.5 484.2 680.2 483.9 679.3 482.6C678.4 481.3 678.8 481.9 678.9 480.2C679 478.5 678.6 479.8 679.6 477.6C680.6 475.4 680.2 476.1 681.8 473.6C683.4 471.1 682.3 472.8 684.4 470C686.5 467.2 685.6 468.5 688.2 465.2C690.8 461.9 689.8 463.4 692.3 460.2C694.8 457 693.5 458.5 695.8 455.6C698.1 452.7 696.7 454.4 699.1 451.4C701.5 448.4 700.4 449.2 703 446.5C705.6 443.8 704.2 445.2 706.8 443.2C709.4 441.2 707.9 442.6 710.9 440.4C713.9 438.2 712.8 438.5 715.7 436.6C718.6 434.7 717.4 435.2 719.7 434.8Z" fill="#fff"/>
<ellipse cx="704.5" cy="458.3" rx="7.4" ry="10.6" transform="rotate(24 704.5 458.3)"/>
<ellipse cx="719.9" cy="442.7" rx="2.7" ry="3.9" transform="rotate(22 719.9 442.7)"/>
<ellipse cx="686.9" cy="475.4" rx="5" ry="3" transform="rotate(-32 686.9 475.4)"/>
<path d="M600.8 473L596.4 470.6L597.6 465.2L601.4 461.2L605.8 463.5" fill="#fff"/>
<path d="M597.6 465.2L602 467.5" stroke-width="0.8"/>
<path d="M601.9 476.2L601.5 476.1L601.1 475.9L600.9 475.7L600.6 475.3L600.5 474.9L600.4 474.3L600.3 473.8L600.4 473.1L600.4 472.4L600.6 471.7L600.8 470.9L601.1 470.1L601.4 469.3L601.7 468.4L602.1 467.6L602.6 466.8L603.1 466.1L603.6 465.4L604.1 464.7L604.6 464.1L605.2 463.6L605.7 463.1L606.2 462.7L606.7 462.4L607.2 462.2L607.7 462.1L608.1 462.1L608.5 462.2L608.8 462.3L609.1 462.6L610.3 463.3L610.5 463.5L610.6 463.9L610.7 464.3L610.8 464.7L610.8 465.2L610.8 465.7L610.8 466.2L610.7 466.8L610.5 467.4L610.4 468L610.2 468.7L609.9 469.3L609.7 470L609.4 470.6L609 471.3L608.7 471.9L608.3 472.5L607.9 473.1L607.5 473.7L607.1 474.2L606.7 474.7L606.2 475.2L605.8 475.6L605.4 475.9L605 476.2L604.5 476.5L604.2 476.6L603.8 476.8L603.4 476.8L603.1 476.8Z" fill="#fff" stroke="none"/>
<path d="M601.9 476.2L601.5 476.1L601.1 475.9L600.9 475.7L600.6 475.3L600.5 474.9L600.4 474.3L600.3 473.8L600.4 473.1L600.4 472.4L600.6 471.7L600.8 470.9L601.1 470.1L601.4 469.3L601.7 468.4L602.1 467.6L602.6 466.8L603.1 466.1L603.6 465.4L604.1 464.7L604.6 464.1L605.2 463.6L605.7 463.1L606.2 462.7L606.7 462.4L607.2 462.2L607.7 462.1L608.1 462.1L608.5 462.2L608.8 462.3L609.1 462.6"/>
<path d="M609 471.3L608.4 472.4L607.8 473.3L607.1 474.3L606.3 475.1L605.6 475.7L604.9 476.2L604.2 476.6L603.6 476.8L603 476.8L602.5 476.7L602.1 476.4L601.8 475.9L601.7 475.2L601.6 474.5L601.6 473.6L601.8 472.6L602 471.6L602.4 470.5L602.8 469.4L603.4 468.3L604 467.2L604.6 466.2L605.3 465.3L606.1 464.5L606.8 463.9L607.5 463.3L608.2 463L608.8 462.8L609.4 462.8L609.9 462.9L610.3 463.2L610.6 463.7L610.7 464.3L610.8 465.1L610.8 466L610.6 467L610.4 468L610 469.1L609.6 470.2L609 471.3Z" fill="#fff"/>
<path d="M606 473.6L605.8 473.5L605.7 473.4L605.6 473.2L605.5 473L605.4 472.8L605.4 472.5L605.3 472.3L605.3 472L605.4 471.7L605.4 471.4L605.5 471L605.6 470.7L605.7 470.4L605.9 470L606 469.7L606.2 469.4L606.4 469.1L606.6 468.8L606.8 468.5L607.1 468.3L607.3 468L607.5 467.8L607.8 467.7L608 467.5L608.2 467.4L608.5 467.4L608.7 467.3L608.9 467.3L609.1 467.4L609.3 467.5L624.4 475.5L624.6 475.6L624.7 475.8L624.9 475.9L625 476.1L625 476.4L625.1 476.6L625.1 476.9L625.1 477.2L625.1 477.5L625 477.8L624.9 478.1L624.8 478.5L624.7 478.8L624.6 479.1L624.4 479.5L624.2 479.8L624 480.1L623.8 480.4L623.6 480.6L623.4 480.9L623.1 481.1L622.9 481.3L622.6 481.5L622.4 481.6L622.2 481.7L621.9 481.8L621.7 481.8L621.5 481.8L621.3 481.8L621.2 481.7Z" fill="#fff" stroke="none"/>
<path d="M609.3 467.5L624.4 475.5M606 473.6L621.2 481.7"/>
<path d="M608.6 475L608.1 474.7L607.8 474.3L607.6 473.6L607.7 472.8L607.9 471.8L608.3 470.9L608.9 470.1L609.5 469.4L610.1 468.9L610.8 468.6L611.4 468.6L611.8 468.9" stroke-width="0.9"/>
<path d="M610.5 476L610 475.8L609.7 475.3L609.6 474.6L609.6 473.8L609.9 472.9L610.3 472L610.8 471.1L611.4 470.4L612.1 469.9L612.7 469.6L613.3 469.6L613.7 469.9" stroke-width="0.9"/>
<path d="M612.5 477L612 476.8L611.7 476.3L611.5 475.7L611.6 474.8L611.8 473.9L612.2 473L612.7 472.1L613.4 471.4L614 470.9L614.7 470.7L615.2 470.7L615.7 470.9" stroke-width="0.9"/>
<path d="M614.4 478.1L613.9 477.8L613.6 477.4L613.5 476.7L613.5 475.9L613.7 474.9L614.2 474L614.7 473.2L615.3 472.5L616 472L616.6 471.7L617.2 471.7L617.6 472" stroke-width="0.9"/>
<path d="M616.3 479.1L615.9 478.9L615.5 478.4L615.4 477.7L615.5 476.9L615.7 476L616.1 475.1L616.6 474.2L617.3 473.5L617.9 473L618.6 472.7L619.1 472.7L619.6 473" stroke-width="0.9"/>
<path d="M618.3 480.1L617.8 479.9L617.5 479.4L617.3 478.8L617.4 477.9L617.6 477L618 476.1L618.6 475.2L619.2 474.5L619.9 474L620.5 473.8L621.1 473.8L621.5 474" stroke-width="0.9"/>
<path d="M620.2 481.2L619.8 480.9L619.4 480.5L619.3 479.8L619.3 479L619.6 478L620 477.1L620.5 476.3L621.1 475.6L621.8 475.1L622.4 474.8L623 474.8L623.5 475.1" stroke-width="0.9"/>
<path d="M624.4 479.5L623.9 480.2L623.4 480.9L622.8 481.4L622.2 481.7L621.6 481.8L621.2 481.7L620.8 481.4L620.6 480.9L620.5 480.2L620.6 479.4L620.8 478.6L621.2 477.8L621.7 477L622.2 476.3L622.8 475.8L623.4 475.5L624 475.4L624.4 475.5L624.8 475.9L625 476.4L625.1 477L625 477.8L624.8 478.6L624.4 479.5Z" fill="#fff"/>
<path d="M753.4 453C755.5 453.2 754.8 453.1 756 454.6C757.2 456.1 756.9 455.5 757 457.6C757.1 459.7 757 458.7 756.4 461C755.8 463.3 756.7 461.5 755.2 464.4C753.7 467.3 754.4 466 752 469.6C749.6 473.2 750.7 471.3 748 475.2C745.3 479.1 746.7 477.4 744 481.4C741.3 485.4 743.7 483.8 740 487.2C736.3 490.6 738.4 488.3 733 491.6C727.6 494.9 728.9 494.2 723.9 497C718.9 499.8 721.4 498.5 718 500C714.6 501.5 716.1 501.4 713.8 501.5C711.5 501.6 712.2 501.6 711 500.4C709.8 499.2 710.2 499.9 710.3 498C710.4 496.1 710 497.4 711.2 494.6C712.4 491.8 711.8 493.4 713.8 489.6C715.8 485.8 714.6 487.6 717.2 483.2C719.8 478.8 718.5 480.9 721.6 476.4C724.7 471.9 723.5 473.4 726.6 469.7C729.7 466 727.9 467.9 731 465.2C734.1 462.5 732.8 463.8 736 461.7C739.2 459.6 737.5 460.6 740.6 458.8C743.7 457 742.3 457.9 745.3 456.3C748.3 454.7 746.9 455.1 749.6 454C752.3 452.9 751.3 452.8 753.4 453Z" fill="#fff"/>
<ellipse cx="736" cy="475.8" rx="7.8" ry="10.4" transform="rotate(22 736 475.8)"/>
<ellipse cx="751.1" cy="460.4" rx="2.9" ry="3.9" transform="rotate(20 751.1 460.4)"/>
<ellipse cx="718" cy="492.7" rx="4.9" ry="2.8" transform="rotate(-28 718 492.7)"/>
<path d="M679.4 519.2L669.5 522.5L661 529.7L654.4 540.2L650.5 553.3L651.2 563.8L657 571.7L666.2 577L683.3 587.4L713.5 535Z" fill="#fff" stroke="none"/>
<path d="M679.4 519.2C677.6 519.4 677.3 518.7 674 519.8C670.7 520.9 672.5 520.6 669.5 522.5C666.5 524.4 667.8 523 665 525.4C662.2 527.8 663.5 526.7 661 529.7C658.5 532.7 659.6 530.9 657.4 534.4C655.2 537.9 656.2 536.1 654.4 540.2C652.6 544.3 653.3 542.2 652 546.6C650.7 551 651 549.2 650.5 553.3C650 557.4 650.2 555.5 650.4 559C650.6 562.5 650.1 560.7 651.2 563.8C652.3 566.9 651.7 565.8 653.6 568.4C655.5 571 654.4 569.6 657 571.7C659.6 573.8 658.3 573 661.4 574.8C664.5 576.6 664.6 576.3 666.2 577"/>
<path d="M679.4 519.2L713.5 535M666.2 577L683.3 587.4"/>
<path d="M679.4 519.2L693.6 526.2M669.5 522.5L688.6 531.6M661 529.7L680.6 538.8M654.4 540.2L672.8 549.4M650.5 553.3L668.2 561.2M651.2 563.8L665.6 570.4M657 571.7L667 576.4" stroke-width="0.8"/>
<path d="M693.6 526.2Q693.7 529.9 688.6 531.6M688.6 531.6Q687.2 536.2 680.6 538.8M680.6 538.8Q679.3 545.1 672.8 549.4M672.8 549.4Q673.1 556.3 668.2 561.2M668.2 561.2Q669.5 566.8 665.6 570.4M665.6 570.4Q668.9 574.4 667 576.4" stroke-width="0.8"/>
<ellipse cx="704.6" cy="565.1" rx="22" ry="31.6" transform="rotate(18 704.6 565.1)" fill="#fff"/>
<path d="M690.6 593.5L688.6 592.4L686.6 590.9L684.9 589L683.3 586.9L682 584.5L680.9 581.9L680.1 579.1L679.5 576.1L679.2 573L679.1 569.8L679.3 566.5L679.8 563.1L680.6 559.8L681.6 556.6L682.8 553.4L684.3 550.4L685.9 547.5L687.8 544.8L689.8 542.3L692 540.1L694.3 538.2L696.7 536.5L699.1 535.2L701.6 534.3L704.1 533.7L706.5 533.4L709 533.5" stroke-width="0.8"/>
<ellipse cx="705.1" cy="565.3" rx="19.4" ry="28.2" transform="rotate(18 705.1 565.3)"/>
<path d="M700.3 591.7L698.4 591.4L696.5 590.9L694.8 590L693.1 588.9L691.6 587.5L690.3 585.9L689.1 584L688.1 582L687.3 579.7L686.7 577.3L686.3 574.8L686.1 572.1L686.2 569.4L686.4 566.6L686.9 563.8L687.6 561.1L688.5 558.4L689.5 555.7L690.8 553.2L692.2 550.8L693.8 548.6L695.5 546.5L697.3 544.7L699.2 543.1L701.1 541.8L703.2 540.7L705.2 539.9L707.3 539.3L709.3 539.1L711.3 539.2L713.2 539.5L715 540.2L716.8 541.1" stroke-width="0.7"/>
<ellipse cx="706" cy="565.6" rx="16.2" ry="23.6" transform="rotate(18 706 565.6)"/>
<ellipse cx="706.1" cy="565.8" rx="4.8" ry="7" transform="rotate(18 706.1 565.8)" stroke-width="1"/>
<ellipse cx="705.8" cy="565.6" rx="2.9" ry="4.7" transform="rotate(18 705.8 565.6)"/>
<path d="M706.3 553.8L706.4 553.8L706.6 554L706.7 554.1L706.8 554.2L706.9 554.3L707 554.5L707 554.7L707.1 554.8L707.1 555L707.1 555.2L707.1 555.4L707.1 555.5L707.1 555.7L707 555.9L707 556L706.9 556.2L706.8 556.3L706.7 556.5L706.6 556.6L706.4 556.7L706.3 556.8L706.2 556.9L706 556.9L705.9 557L705.7 557L705.5 557L705.4 557L705.2 556.9L705.1 556.9L704.9 556.8L704.8 556.7L704.7 556.6L704.6 556.5L704.5 556.3L704.4 556.2L704.3 556.1L704.2 555.9L704.2 555.7L704.1 555.5L704.1 555.4L704.1 555.2L704.1 555L704.2 554.8L704.2 554.7L704.3 554.5L704.4 554.4L704.4 554.2L704.6 554.1L704.7 554L704.8 553.9" stroke-width="0.9"/>
<path d="M713.4 553.7L713.5 553.9L713.6 554L713.6 554.2L713.7 554.4L713.7 554.6L713.7 554.7L713.7 554.9L713.6 555.1L713.6 555.3L713.5 555.4L713.4 555.6L713.3 555.7L713.2 555.8L713.1 556L713 556.1L712.8 556.1L712.7 556.2L712.5 556.3L712.4 556.3L712.2 556.3L712.1 556.3L711.9 556.3L711.8 556.3L711.6 556.2L711.5 556.1L711.3 556L711.2 555.9L711.1 555.8L711 555.7L710.9 555.5L710.8 555.4L710.8 555.2L710.7 555L710.7 554.9L710.7 554.7L710.7 554.5L710.7 554.3L710.7 554.2L710.8 554L710.9 553.8L710.9 553.7L711 553.5L711.1 553.4L711.3 553.3L711.4 553.2L711.5 553.1L711.7 553L711.8 553L712 552.9L712.1 552.9" stroke-width="0.9"/>
<path d="M717.6 560.6L717.6 560.7L717.6 560.9L717.5 561.1L717.5 561.3L717.4 561.4L717.3 561.6L717.2 561.7L717.1 561.8L717 561.9L716.8 562L716.7 562.1L716.5 562.2L716.4 562.2L716.2 562.2L716.1 562.2L715.9 562.2L715.8 562.2L715.6 562.1L715.5 562.1L715.3 562L715.2 561.9L715.1 561.8L715 561.6L714.9 561.5L714.8 561.3L714.7 561.2L714.7 561L714.6 560.8L714.6 560.7L714.6 560.5L714.6 560.3L714.7 560.1L714.7 560L714.8 559.8L714.8 559.6L714.9 559.5L715 559.4L715.1 559.2L715.3 559.1L715.4 559L715.5 559L715.7 558.9L715.8 558.9L716 558.8L716.2 558.8L716.3 558.8L716.5 558.9L716.6 558.9L716.8 559L716.9 559.1" stroke-width="0.9"/>
<path d="M713.6 571.2L713.4 571.3L713.3 571.3L713.1 571.4L713 571.4L712.8 571.4L712.7 571.4L712.5 571.4L712.4 571.3L712.2 571.3L712.1 571.2L712 571.1L711.8 571L711.7 570.9L711.6 570.7L711.5 570.6L711.5 570.4L711.4 570.2L711.4 570.1L711.3 569.9L711.3 569.7L711.3 569.5L711.4 569.4L711.4 569.2L711.5 569L711.5 568.9L711.6 568.7L711.7 568.6L711.8 568.5L712 568.3L712.1 568.2L712.2 568.2L712.4 568.1L712.5 568L712.7 568L712.8 568L713 568L713.1 568L713.3 568.1L713.4 568.2L713.6 568.2L713.7 568.3L713.8 568.4L713.9 568.6L714 568.7L714.1 568.9L714.2 569L714.3 569.2L714.3 569.4L714.3 569.5L714.3 569.7" stroke-width="0.9"/>
<path d="M704.8 578.4L704.7 578.2L704.6 578.1L704.5 578L704.4 577.9L704.3 577.7L704.2 577.5L704.2 577.4L704.1 577.2L704.1 577L704.1 576.8L704.1 576.7L704.2 576.5L704.2 576.3L704.3 576.2L704.4 576L704.5 575.9L704.6 575.7L704.7 575.6L704.8 575.5L704.9 575.4L705.1 575.3L705.2 575.3L705.4 575.2L705.5 575.2L705.7 575.2L705.9 575.3L706 575.3L706.2 575.3L706.3 575.4L706.4 575.5L706.6 575.6L706.7 575.7L706.8 575.9L706.9 576L707 576.2L707 576.3L707.1 576.5L707.1 576.7L707.1 576.8L707.1 577L707.1 577.2L707.1 577.4L707 577.5L707 577.7L706.9 577.9L706.8 578L706.7 578.1L706.6 578.3L706.4 578.4L706.3 578.4" stroke-width="0.9"/>
<path d="M697 577.6L697 577.5L696.9 577.3L696.9 577.1L696.9 577L696.9 576.8L696.9 576.6L697 576.4L697 576.3L697.1 576.1L697.2 575.9L697.3 575.8L697.4 575.7L697.5 575.6L697.6 575.5L697.8 575.4L697.9 575.3L698.1 575.3L698.2 575.2L698.4 575.2L698.5 575.2L698.7 575.3L698.8 575.3L699 575.4L699.1 575.4L699.3 575.5L699.4 575.7L699.5 575.8L699.6 575.9L699.7 576.1L699.8 576.2L699.8 576.4L699.9 576.6L699.9 576.7L699.9 576.9L699.9 577.1L699.9 577.3L699.8 577.4L699.8 577.6L699.7 577.8L699.6 577.9L699.5 578.1L699.4 578.2L699.3 578.3L699.2 578.4L699 578.5L698.9 578.5L698.7 578.6L698.6 578.6L698.4 578.6L698.3 578.6" stroke-width="0.9"/>
<path d="M695.2 570.2L695.2 570L695.3 569.9L695.3 569.7L695.4 569.5L695.5 569.4L695.6 569.3L695.7 569.1L695.8 569L695.9 568.9L696.1 568.8L696.2 568.8L696.4 568.7L696.5 568.7L696.7 568.7L696.8 568.7L697 568.7L697.1 568.7L697.3 568.8L697.4 568.9L697.5 569L697.7 569.1L697.8 569.2L697.9 569.3L698 569.5L698.1 569.6L698.1 569.8L698.2 570L698.2 570.2L698.2 570.3L698.2 570.5L698.2 570.7L698.1 570.9L698.1 571L698 571.2L697.9 571.3L697.8 571.5L697.7 571.6L697.6 571.7L697.5 571.8L697.3 571.9L697.2 572L697 572L696.9 572.1L696.7 572.1L696.6 572.1L696.4 572L696.3 572L696.1 571.9L696 571.9L695.8 571.8" stroke-width="0.9"/>
<path d="M699 560.3L699.2 560.3L699.3 560.2L699.5 560.2L699.6 560.1L699.8 560.1L699.9 560.2L700.1 560.2L700.2 560.2L700.4 560.3L700.5 560.4L700.6 560.5L700.8 560.6L700.9 560.7L701 560.9L701 561L701.1 561.2L701.2 561.4L701.2 561.5L701.2 561.7L701.2 561.9L701.2 562.1L701.2 562.3L701.1 562.4L701.1 562.6L701 562.7L700.9 562.9L700.8 563L700.7 563.1L700.5 563.2L700.4 563.3L700.3 563.4L700.1 563.5L700 563.5L699.8 563.5L699.7 563.5L699.5 563.5L699.3 563.5L699.2 563.4L699.1 563.4L698.9 563.3L698.8 563.2L698.7 563.1L698.6 562.9L698.5 562.8L698.4 562.6L698.3 562.5L698.3 562.3L698.2 562.1L698.2 562L698.2 561.8" stroke-width="0.9"/>
<path d="M479.6 143.5L502 143.5M584.8 176.5L607 176.5M480 202.5L501 202.5M572 237.5L593.6 237.5M510.5 274.5L531.5 274.5M568.5 253.8L568.5 275.3M459.9 326.5L480.7 326.5M551.8 316.5L573.4 316.5M461 363.5L482.4 363.5M473.5 387.5L494.6 387.5M562.4 362.5L583.5 362.5M482.6 421.5L503.4 421.5M495.6 467.5L517.2 467.5M494.8 546.5L515.6 546.5M598.5 533.9L598.5 555.6M591.5 407.7L591.5 428.3M620.5 423.6L620.5 446.2M611.5 475.8L611.5 496.4M668.7 268.5L688.9 268.5M675.4 298.5L695.6 298.5M689.7 377.5L711.5 377.5M745.5 435.3L745.5 456.3M729 551.5L750.4 551.5" stroke-width="1" stroke="#333" stroke-linecap="butt"/>
<path d="M623.6 478.1L631.2 482L665.6 462.2"/>
</g>
<g>
<text transform="translate(0 97.6) scale(0.9 1) rotate(0.02)" x="799.5 808.5 816.9 825.7 834.1 843.4 849.8 858.9 867.2 875.6 883.3" y="0" font-size="11.7" style="font-weight:normal;stroke-width:0.6px">E0140-A033A</text>
<text transform="translate(451.8 146.1) scale(0.9 1) rotate(0.03)" font-size="8.6" textLength="30.1" lengthAdjust="spacing">59051</text>
<text transform="translate(607.8 179.9) scale(0.9 1) rotate(0.03)" font-size="8.6" textLength="17.2" lengthAdjust="spacing">130</text>
<text transform="translate(452 205.1) scale(0.9 1) rotate(0.03)" font-size="8.6" textLength="30.2" lengthAdjust="spacing">14024</text>
<text transform="translate(594.4 239.8) scale(0.9 1) rotate(0.03)" font-size="8.6" textLength="30.2" lengthAdjust="spacing">92042</text>
<text transform="translate(482.4 277.2) scale(0.9 1) rotate(0.03)" font-size="8.6" textLength="30.3" lengthAdjust="spacing">13107</text>
<text transform="translate(555 284.4) scale(0.9 1) rotate(0.03)" font-size="8.6" textLength="30.3" lengthAdjust="spacing">92042</text>
<text transform="translate(431.7 329.9) scale(0.9 1) rotate(0.03)" font-size="8.6" textLength="30.2" lengthAdjust="spacing">92144</text>
<text transform="translate(574.6 319.6) scale(0.9 1) rotate(0.03)" font-size="8.6" textLength="30.3" lengthAdjust="spacing">16154</text>
<text transform="translate(444.3 365.7) scale(0.9 1) rotate(0.03)" font-size="8.6" textLength="17.7" lengthAdjust="spacing">600</text>
<text transform="translate(495.8 390.1) scale(0.9 1) rotate(0.03)" font-size="8.6" textLength="17.9" lengthAdjust="spacing">670</text>
<text transform="translate(584.6 364.9) scale(0.9 1) rotate(0.03)" font-size="8.6" textLength="36" lengthAdjust="spacing">16154A</text>
<text transform="translate(505.2 424.2) scale(0.9 1) rotate(0.03)" font-size="8.6" textLength="17.1" lengthAdjust="spacing">130</text>
<text transform="translate(518.1 470.3) scale(0.9 1) rotate(0.03)" font-size="8.6" textLength="30.3" lengthAdjust="spacing">13183</text>
<text transform="translate(578 436.7) scale(0.9 1) rotate(0.03)" font-size="8.6" textLength="30.2" lengthAdjust="spacing">92066</text>
<text transform="translate(604.9 455.1) scale(0.9 1) rotate(0.03)" font-size="8.6" textLength="36.1" lengthAdjust="spacing">11009A</text>
<text transform="translate(601.9 505.5) scale(0.9 1) rotate(0.03)" font-size="8.6" textLength="24" lengthAdjust="spacing">130A</text>
<text transform="translate(516.4 550.3) scale(0.9 1) rotate(0.03)" font-size="8.6" textLength="30.3" lengthAdjust="spacing">49065</text>
<text transform="translate(584.8 530.9) scale(0.9 1) rotate(0.03)" font-size="8.6" textLength="30.2" lengthAdjust="spacing">92055</text>
<text transform="translate(689.7 271.5) scale(0.9 1) rotate(0.03)" font-size="8.6" textLength="30.1" lengthAdjust="spacing">52005</text>
<text transform="translate(696.9 301.2) scale(0.9 1) rotate(0.03)" font-size="8.6" textLength="29.2" lengthAdjust="spacing">11009</text>
<text transform="translate(712.3 381.1) scale(0.9 1) rotate(0.03)" font-size="8.6" textLength="29.8" lengthAdjust="spacing">59231</text>
<text transform="translate(732.6 432.8) scale(0.9 1) rotate(0.03)" font-size="8.6" textLength="29.8" lengthAdjust="spacing">11060</text>
<text transform="translate(751 555) scale(0.9 1) rotate(0.03)" font-size="8.6" textLength="36.6" lengthAdjust="spacing">49065A</text>
</g>
</svg>
<div id="thead">
<svg class="so" style="left:77.4px" viewBox="0 0 8 10"><path d="M4 0L8 4.4H0ZM0 5.6H8L4 10Z" fill="#fff"/></svg>
<svg class="so" style="left:193.6px" viewBox="0 0 8 10"><path d="M4 0L8 4.4H0ZM0 5.6H8L4 10Z" fill="#fff"/></svg>
<svg class="so" style="left:327.4px" viewBox="0 0 8 10"><path d="M4 0L8 4.4H0ZM0 5.6H8L4 10Z" fill="#fff"/></svg>
<svg class="so" style="left:603.4px" viewBox="0 0 8 10"><path d="M4 0L8 4.4H0ZM0 5.6H8L4 10Z" fill="#fff"/></svg>
<svg class="so" style="left:736.6px" viewBox="0 0 8 10"><path d="M4 0L8 4.4H0ZM0 5.6H8L4 10Z" fill="#fff"/></svg>
<svg class="so" style="left:981.3px" viewBox="0 0 8 10"><path d="M4 0L8 4.4H0ZM0 5.6H8L4 10Z" fill="#fff"/></svg>
<svg class="so" style="left:1187.2px" viewBox="0 0 8 10"><path d="M4 0L8 4.4H0ZM0 5.6H8L4 10Z" fill="#fff"/></svg>
<span class="th" style="left:129.6px">Ref #</span>
<span class="th" style="left:253.6px">Part #</span>
<span class="cb" style="left:437px"><svg width="12" height="12" viewBox="0 0 12 12"><path d="M2.6 6.2L5 8.6L9.6 3" fill="none" stroke="#fff" stroke-width="1.9" stroke-linecap="round" stroke-linejoin="round"/></svg></span><span class="th" style="left:451.6px">Description</span>
<span class="cb" style="left:662px"><svg width="12" height="12" viewBox="0 0 12 12"><path d="M2.6 6.2L5 8.6L9.6 3" fill="none" stroke="#fff" stroke-width="1.9" stroke-linecap="round" stroke-linejoin="round"/></svg></span><span class="th" style="left:676.2px">Qty</span>
<span class="cb" style="left:827px"><svg width="12" height="12" viewBox="0 0 12 12"><path d="M2.6 6.2L5 8.6L9.6 3" fill="none" stroke="#fff" stroke-width="1.9" stroke-linecap="round" stroke-linejoin="round"/></svg></span><span class="th" style="left:840.8px">Context Note</span>
<span class="cb" style="left:1060px"><svg width="12" height="12" viewBox="0 0 12 12"><path d="M2.6 6.2L5 8.6L9.6 3" fill="none" stroke="#fff" stroke-width="1.9" stroke-linecap="round" stroke-linejoin="round"/></svg></span><span class="th" style="left:1074.8px">Foot Note</span>
</div>
<div class="row" id="r1"><svg style="left:74px;top:1.4px" width="16" height="17" viewBox="0 0 16 17"><rect x="0.7" y="2.2" width="14.2" height="13.6" rx="1.6" fill="#fff" stroke="#111" stroke-width="1.2"/><path d="M2.5 1.2V3.4M4.7 1.2V3.4M6.9 1.2V3.4M9.1 1.2V3.4M11.3 1.2V3.4M13.3 1.2V3.4" stroke="#222" stroke-width="1"/><path d="M3 7H8M3 9.6H6.4M3 12.2H6M9.4 12.4H12.4" stroke="#1a1a8c" stroke-width="1.3"/><path d="M12.6 5.2L8 11.4L6 9.2" fill="none" stroke="#1a1a8c" stroke-width="1.7"/></svg><span style="left:135.6px">52005</span><span style="left:247px">52005-2079</span><span style="left:447.6px">GAUGE - OIL</span><span style="left:682px">1</span></div>
<div class="row" id="r2"><svg style="left:21px;top:2px" width="18" height="17" viewBox="0 0 18 17"><path d="M0.6 5.4L7 0.8L6.6 3.6C11.6 3.4 15.8 7.4 15.6 14.8C13.6 10 10.8 8.2 6.2 8.6L6.4 11.4Z" fill="#111"/></svg><svg style="left:74px;top:0.8px" width="16" height="17" viewBox="0 0 16 17"><rect x="0.7" y="2.2" width="14.2" height="13.6" rx="1.6" fill="#fff" stroke="#111" stroke-width="1.2"/><path d="M2.5 1.2V3.4M4.7 1.2V3.4M6.9 1.2V3.4M9.1 1.2V3.4M11.3 1.2V3.4M13.3 1.2V3.4" stroke="#222" stroke-width="1"/><path d="M3 7H8M3 9.6H6.4M3 12.2H6M9.4 12.4H12.4" stroke="#1a1a8c" stroke-width="1.3"/><path d="M12.6 5.2L8 11.4L6 9.2" fill="none" stroke="#1a1a8c" stroke-width="1.7"/></svg><span style="left:135.6px">59051</span><span style="left:247px">59051-2114</span><span style="left:448.4px">GEAR-SPUR</span><span style="left:682px">1</span></div>
<div class="row" id="r3"><svg style="left:21px;top:1px" width="18" height="4" viewBox="0 0 18 4"><path d="M4.4 3L7 0.6L8 3Z" fill="#111"/></svg><svg style="left:74px;top:0.6px" width="16" height="4" viewBox="0 0 16 4"><rect x="0.7" y="2.2" width="14.2" height="13.6" rx="1.6" fill="#fff" stroke="#111" stroke-width="1.2"/><path d="M2.5 1.2V3.4M4.7 1.2V3.4M6.9 1.2V3.4M9.1 1.2V3.4M11.3 1.2V3.4M13.3 1.2V3.4" stroke="#222" stroke-width="1"/></svg></div>
<div id="lb"></div>
</body>
</html>
